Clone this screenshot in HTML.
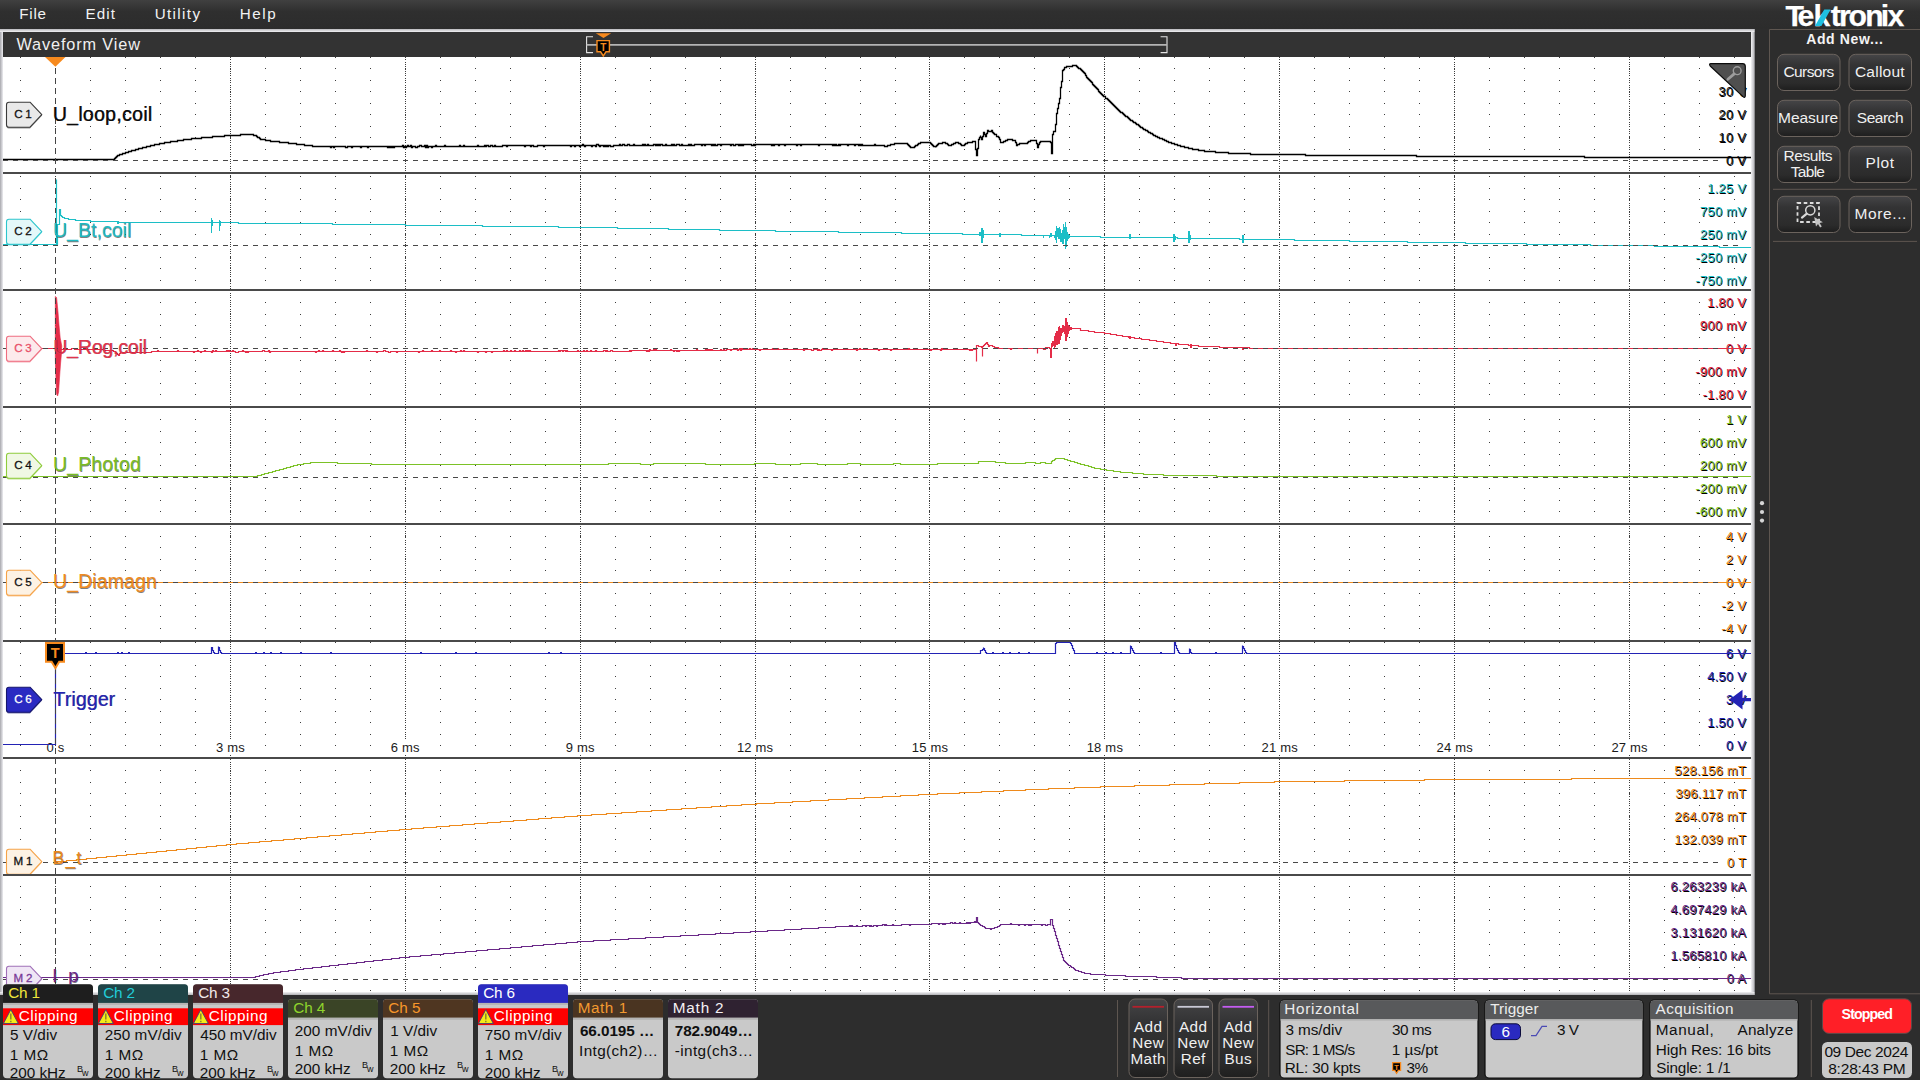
<!DOCTYPE html>
<html><head><meta charset="utf-8"><title>Waveform View</title>
<style>
html,body{margin:0;padding:0;background:#2d2d2d;overflow:hidden}
svg{display:block;font-family:"Liberation Sans",sans-serif}
</style></head><body>
<svg width="1920" height="1080" viewBox="0 0 1920 1080">
<defs>
<linearGradient id="gTop" x1="0" y1="0" x2="0" y2="1"><stop offset="0" stop-color="#404040"/><stop offset="0.4" stop-color="#2f2f2f"/><stop offset="1" stop-color="#2c2c2c"/></linearGradient>
<linearGradient id="gBtn" x1="0" y1="0" x2="0" y2="1"><stop offset="0" stop-color="#454547"/><stop offset="0.3" stop-color="#333334"/><stop offset="0.8" stop-color="#2b2b2b"/><stop offset="0.92" stop-color="#232323"/><stop offset="1" stop-color="#1f1f1f"/></linearGradient>
<linearGradient id="gLB" x1="0" y1="0" x2="1" y2="0"><stop offset="0" stop-color="#a8a8ad"/><stop offset="1" stop-color="#ececf0"/></linearGradient>
<linearGradient id="gRB" x1="0" y1="0" x2="1" y2="0"><stop offset="0" stop-color="#f4f4f6"/><stop offset="1" stop-color="#b4b4b8"/></linearGradient>
<linearGradient id="gTB" x1="0" y1="0" x2="0" y2="1"><stop offset="0" stop-color="#b8b8bc"/><stop offset="1" stop-color="#f2f2f4"/></linearGradient>
<linearGradient id="gBB" x1="0" y1="0" x2="0" y2="1"><stop offset="0" stop-color="#f2f2f4"/><stop offset="1" stop-color="#b0b0b4"/></linearGradient>
</defs>

<rect x="0" y="0" width="1920" height="1080" fill="#2d2d2d" />
<rect x="0" y="0" width="1920" height="29" fill="url(#gTop)" />
<rect x="0" y="29" width="1754.4" height="966" fill="#dcdce0" />
<rect x="0" y="29" width="3" height="966" fill="url(#gLB)" />
<rect x="1751" y="29" width="3.4" height="966" fill="url(#gRB)" />
<rect x="0" y="29" width="1754.4" height="3" fill="url(#gTB)" />
<rect x="0" y="992" width="1754.4" height="3" fill="url(#gBB)" />
<rect x="3" y="32" width="1748" height="25" fill="#333333" />
<rect x="3" y="57" width="1748" height="935" fill="#ffffff" />
<text x="19.15" y="18.80" font-size="15.2" letter-spacing="0.810"  fill="#f2f2f2">File</text>
<text x="85.45" y="18.80" font-size="15.2" letter-spacing="1.155"  fill="#f2f2f2">Edit</text>
<text x="154.63" y="18.80" font-size="15.2" letter-spacing="1.375"  fill="#f2f2f2">Utility</text>
<text x="239.75" y="18.80" font-size="15.2" letter-spacing="1.541"  fill="#f2f2f2">Help</text>
<text x="16.43" y="50.00" font-size="16.3" letter-spacing="0.867"  fill="#f0f0f0">Waveform View</text>
<g id="grid" shape-rendering="crispEdges">
<line x1="20" y1="57.5" x2="1751" y2="57.5" stroke="#3c3c3c" stroke-width="1" stroke-dasharray="1 33.98"/>
<line x1="20" y1="68.5" x2="1751" y2="68.5" stroke="#3c3c3c" stroke-width="1" stroke-dasharray="1 33.98"/>
<line x1="20" y1="80.5" x2="1751" y2="80.5" stroke="#3c3c3c" stroke-width="1" stroke-dasharray="1 33.98"/>
<line x1="20" y1="91.5" x2="1751" y2="91.5" stroke="#3c3c3c" stroke-width="1" stroke-dasharray="1 33.98"/>
<line x1="20" y1="103.5" x2="1751" y2="103.5" stroke="#3c3c3c" stroke-width="1" stroke-dasharray="1 33.98"/>
<line x1="20" y1="114.5" x2="1751" y2="114.5" stroke="#3c3c3c" stroke-width="1" stroke-dasharray="1 33.98"/>
<line x1="20" y1="126.5" x2="1751" y2="126.5" stroke="#3c3c3c" stroke-width="1" stroke-dasharray="1 33.98"/>
<line x1="20" y1="137.5" x2="1751" y2="137.5" stroke="#3c3c3c" stroke-width="1" stroke-dasharray="1 33.98"/>
<line x1="20" y1="149.5" x2="1751" y2="149.5" stroke="#3c3c3c" stroke-width="1" stroke-dasharray="1 33.98"/>
<line x1="20" y1="176.5" x2="1751" y2="176.5" stroke="#3c3c3c" stroke-width="1" stroke-dasharray="1 33.98"/>
<line x1="20" y1="188.5" x2="1751" y2="188.5" stroke="#3c3c3c" stroke-width="1" stroke-dasharray="1 33.98"/>
<line x1="20" y1="199.5" x2="1751" y2="199.5" stroke="#3c3c3c" stroke-width="1" stroke-dasharray="1 33.98"/>
<line x1="20" y1="211.5" x2="1751" y2="211.5" stroke="#3c3c3c" stroke-width="1" stroke-dasharray="1 33.98"/>
<line x1="20" y1="222.5" x2="1751" y2="222.5" stroke="#3c3c3c" stroke-width="1" stroke-dasharray="1 33.98"/>
<line x1="20" y1="234.5" x2="1751" y2="234.5" stroke="#3c3c3c" stroke-width="1" stroke-dasharray="1 33.98"/>
<line x1="20" y1="257.5" x2="1751" y2="257.5" stroke="#3c3c3c" stroke-width="1" stroke-dasharray="1 33.98"/>
<line x1="20" y1="268.5" x2="1751" y2="268.5" stroke="#3c3c3c" stroke-width="1" stroke-dasharray="1 33.98"/>
<line x1="20" y1="280.5" x2="1751" y2="280.5" stroke="#3c3c3c" stroke-width="1" stroke-dasharray="1 33.98"/>
<line x1="20" y1="302.5" x2="1751" y2="302.5" stroke="#3c3c3c" stroke-width="1" stroke-dasharray="1 33.98"/>
<line x1="20" y1="314.5" x2="1751" y2="314.5" stroke="#3c3c3c" stroke-width="1" stroke-dasharray="1 33.98"/>
<line x1="20" y1="325.5" x2="1751" y2="325.5" stroke="#3c3c3c" stroke-width="1" stroke-dasharray="1 33.98"/>
<line x1="20" y1="337.5" x2="1751" y2="337.5" stroke="#3c3c3c" stroke-width="1" stroke-dasharray="1 33.98"/>
<line x1="20" y1="360.5" x2="1751" y2="360.5" stroke="#3c3c3c" stroke-width="1" stroke-dasharray="1 33.98"/>
<line x1="20" y1="371.5" x2="1751" y2="371.5" stroke="#3c3c3c" stroke-width="1" stroke-dasharray="1 33.98"/>
<line x1="20" y1="383.5" x2="1751" y2="383.5" stroke="#3c3c3c" stroke-width="1" stroke-dasharray="1 33.98"/>
<line x1="20" y1="394.5" x2="1751" y2="394.5" stroke="#3c3c3c" stroke-width="1" stroke-dasharray="1 33.98"/>
<line x1="20" y1="419.5" x2="1751" y2="419.5" stroke="#3c3c3c" stroke-width="1" stroke-dasharray="1 33.98"/>
<line x1="20" y1="431.5" x2="1751" y2="431.5" stroke="#3c3c3c" stroke-width="1" stroke-dasharray="1 33.98"/>
<line x1="20" y1="442.5" x2="1751" y2="442.5" stroke="#3c3c3c" stroke-width="1" stroke-dasharray="1 33.98"/>
<line x1="20" y1="454.5" x2="1751" y2="454.5" stroke="#3c3c3c" stroke-width="1" stroke-dasharray="1 33.98"/>
<line x1="20" y1="465.5" x2="1751" y2="465.5" stroke="#3c3c3c" stroke-width="1" stroke-dasharray="1 33.98"/>
<line x1="20" y1="488.5" x2="1751" y2="488.5" stroke="#3c3c3c" stroke-width="1" stroke-dasharray="1 33.98"/>
<line x1="20" y1="500.5" x2="1751" y2="500.5" stroke="#3c3c3c" stroke-width="1" stroke-dasharray="1 33.98"/>
<line x1="20" y1="511.5" x2="1751" y2="511.5" stroke="#3c3c3c" stroke-width="1" stroke-dasharray="1 33.98"/>
<line x1="20" y1="536.5" x2="1751" y2="536.5" stroke="#3c3c3c" stroke-width="1" stroke-dasharray="1 33.98"/>
<line x1="20" y1="547.5" x2="1751" y2="547.5" stroke="#3c3c3c" stroke-width="1" stroke-dasharray="1 33.98"/>
<line x1="20" y1="559.5" x2="1751" y2="559.5" stroke="#3c3c3c" stroke-width="1" stroke-dasharray="1 33.98"/>
<line x1="20" y1="570.5" x2="1751" y2="570.5" stroke="#3c3c3c" stroke-width="1" stroke-dasharray="1 33.98"/>
<line x1="20" y1="593.5" x2="1751" y2="593.5" stroke="#3c3c3c" stroke-width="1" stroke-dasharray="1 33.98"/>
<line x1="20" y1="605.5" x2="1751" y2="605.5" stroke="#3c3c3c" stroke-width="1" stroke-dasharray="1 33.98"/>
<line x1="20" y1="616.5" x2="1751" y2="616.5" stroke="#3c3c3c" stroke-width="1" stroke-dasharray="1 33.98"/>
<line x1="20" y1="628.5" x2="1751" y2="628.5" stroke="#3c3c3c" stroke-width="1" stroke-dasharray="1 33.98"/>
<line x1="20" y1="642.5" x2="1751" y2="642.5" stroke="#3c3c3c" stroke-width="1" stroke-dasharray="1 33.98"/>
<line x1="20" y1="653.5" x2="1751" y2="653.5" stroke="#3c3c3c" stroke-width="1" stroke-dasharray="1 33.98"/>
<line x1="20" y1="665.5" x2="1751" y2="665.5" stroke="#3c3c3c" stroke-width="1" stroke-dasharray="1 33.98"/>
<line x1="20" y1="676.5" x2="1751" y2="676.5" stroke="#3c3c3c" stroke-width="1" stroke-dasharray="1 33.98"/>
<line x1="20" y1="688.5" x2="1751" y2="688.5" stroke="#3c3c3c" stroke-width="1" stroke-dasharray="1 33.98"/>
<line x1="20" y1="699.5" x2="1751" y2="699.5" stroke="#3c3c3c" stroke-width="1" stroke-dasharray="1 33.98"/>
<line x1="20" y1="711.5" x2="1751" y2="711.5" stroke="#3c3c3c" stroke-width="1" stroke-dasharray="1 33.98"/>
<line x1="20" y1="722.5" x2="1751" y2="722.5" stroke="#3c3c3c" stroke-width="1" stroke-dasharray="1 33.98"/>
<line x1="20" y1="734.5" x2="1751" y2="734.5" stroke="#3c3c3c" stroke-width="1" stroke-dasharray="1 33.98"/>
<line x1="20" y1="745.5" x2="1751" y2="745.5" stroke="#3c3c3c" stroke-width="1" stroke-dasharray="1 33.98"/>
<line x1="20" y1="770.5" x2="1751" y2="770.5" stroke="#3c3c3c" stroke-width="1" stroke-dasharray="1 33.98"/>
<line x1="20" y1="782.5" x2="1751" y2="782.5" stroke="#3c3c3c" stroke-width="1" stroke-dasharray="1 33.98"/>
<line x1="20" y1="793.5" x2="1751" y2="793.5" stroke="#3c3c3c" stroke-width="1" stroke-dasharray="1 33.98"/>
<line x1="20" y1="805.5" x2="1751" y2="805.5" stroke="#3c3c3c" stroke-width="1" stroke-dasharray="1 33.98"/>
<line x1="20" y1="816.5" x2="1751" y2="816.5" stroke="#3c3c3c" stroke-width="1" stroke-dasharray="1 33.98"/>
<line x1="20" y1="828.5" x2="1751" y2="828.5" stroke="#3c3c3c" stroke-width="1" stroke-dasharray="1 33.98"/>
<line x1="20" y1="839.5" x2="1751" y2="839.5" stroke="#3c3c3c" stroke-width="1" stroke-dasharray="1 33.98"/>
<line x1="20" y1="851.5" x2="1751" y2="851.5" stroke="#3c3c3c" stroke-width="1" stroke-dasharray="1 33.98"/>
<line x1="20" y1="886.5" x2="1751" y2="886.5" stroke="#3c3c3c" stroke-width="1" stroke-dasharray="1 33.98"/>
<line x1="20" y1="897.5" x2="1751" y2="897.5" stroke="#3c3c3c" stroke-width="1" stroke-dasharray="1 33.98"/>
<line x1="20" y1="909.5" x2="1751" y2="909.5" stroke="#3c3c3c" stroke-width="1" stroke-dasharray="1 33.98"/>
<line x1="20" y1="920.5" x2="1751" y2="920.5" stroke="#3c3c3c" stroke-width="1" stroke-dasharray="1 33.98"/>
<line x1="20" y1="932.5" x2="1751" y2="932.5" stroke="#3c3c3c" stroke-width="1" stroke-dasharray="1 33.98"/>
<line x1="20" y1="944.5" x2="1751" y2="944.5" stroke="#3c3c3c" stroke-width="1" stroke-dasharray="1 33.98"/>
<line x1="20" y1="955.5" x2="1751" y2="955.5" stroke="#3c3c3c" stroke-width="1" stroke-dasharray="1 33.98"/>
<line x1="20" y1="967.5" x2="1751" y2="967.5" stroke="#3c3c3c" stroke-width="1" stroke-dasharray="1 33.98"/>
<line x1="20" y1="990.5" x2="1751" y2="990.5" stroke="#3c3c3c" stroke-width="1" stroke-dasharray="1 33.98"/>
<line x1="230.5" y1="57" x2="230.5" y2="992" stroke="#3c3c3c" stroke-width="1" stroke-dasharray="1 1.31"/>
<line x1="405.5" y1="57" x2="405.5" y2="992" stroke="#3c3c3c" stroke-width="1" stroke-dasharray="1 1.31"/>
<line x1="580.5" y1="57" x2="580.5" y2="992" stroke="#3c3c3c" stroke-width="1" stroke-dasharray="1 1.31"/>
<line x1="755.5" y1="57" x2="755.5" y2="992" stroke="#3c3c3c" stroke-width="1" stroke-dasharray="1 1.31"/>
<line x1="929.5" y1="57" x2="929.5" y2="992" stroke="#3c3c3c" stroke-width="1" stroke-dasharray="1 1.31"/>
<line x1="1104.5" y1="57" x2="1104.5" y2="992" stroke="#3c3c3c" stroke-width="1" stroke-dasharray="1 1.31"/>
<line x1="1279.5" y1="57" x2="1279.5" y2="992" stroke="#3c3c3c" stroke-width="1" stroke-dasharray="1 1.31"/>
<line x1="1454.5" y1="57" x2="1454.5" y2="992" stroke="#3c3c3c" stroke-width="1" stroke-dasharray="1 1.31"/>
<line x1="1629.5" y1="57" x2="1629.5" y2="992" stroke="#3c3c3c" stroke-width="1" stroke-dasharray="1 1.31"/>
</g>
<g id="ylabels">
<rect x="1716.8" y="86" width="31.5" height="12" fill="#ffffff" />
<text x="1747.10" y="97.20" font-size="13" letter-spacing="0.250" text-anchor="end"  fill="#000">30 V</text>
<text x="1746.30" y="96.40" font-size="13" letter-spacing="0.250" text-anchor="end"  fill="#111111">30 V</text>
<rect x="1716.8" y="109" width="31.5" height="12" fill="#ffffff" />
<text x="1747.10" y="120.20" font-size="13" letter-spacing="0.250" text-anchor="end"  fill="#000">20 V</text>
<text x="1746.30" y="119.40" font-size="13" letter-spacing="0.250" text-anchor="end"  fill="#111111">20 V</text>
<rect x="1716.8" y="132" width="31.5" height="12" fill="#ffffff" />
<text x="1747.10" y="143.20" font-size="13" letter-spacing="0.250" text-anchor="end"  fill="#000">10 V</text>
<text x="1746.30" y="142.40" font-size="13" letter-spacing="0.250" text-anchor="end"  fill="#111111">10 V</text>
<rect x="1724.3" y="155" width="24.0" height="12" fill="#ffffff" />
<text x="1747.10" y="166.20" font-size="13" letter-spacing="0.250" text-anchor="end"  fill="#000">0 V</text>
<text x="1746.30" y="165.40" font-size="13" letter-spacing="0.250" text-anchor="end"  fill="#111111">0 V</text>
<rect x="1705.5" y="183" width="42.8" height="12" fill="#ffffff" />
<text x="1747.10" y="194.20" font-size="13" letter-spacing="0.250" text-anchor="end"  fill="#000">1.25 V</text>
<text x="1746.30" y="193.40" font-size="13" letter-spacing="0.250" text-anchor="end"  fill="#1cbec6">1.25 V</text>
<rect x="1698.2" y="206" width="50.1" height="12" fill="#ffffff" />
<text x="1747.10" y="217.20" font-size="13" letter-spacing="0.250" text-anchor="end"  fill="#000">750 mV</text>
<text x="1746.30" y="216.40" font-size="13" letter-spacing="0.250" text-anchor="end"  fill="#1cbec6">750 mV</text>
<rect x="1698.2" y="229" width="50.1" height="12" fill="#ffffff" />
<text x="1747.10" y="240.20" font-size="13" letter-spacing="0.250" text-anchor="end"  fill="#000">250 mV</text>
<text x="1746.30" y="239.40" font-size="13" letter-spacing="0.250" text-anchor="end"  fill="#1cbec6">250 mV</text>
<rect x="1693.7" y="252" width="54.6" height="12" fill="#ffffff" />
<text x="1747.10" y="263.20" font-size="13" letter-spacing="0.250" text-anchor="end"  fill="#000">-250 mV</text>
<text x="1746.30" y="262.40" font-size="13" letter-spacing="0.250" text-anchor="end"  fill="#1cbec6">-250 mV</text>
<rect x="1693.7" y="275" width="54.6" height="12" fill="#ffffff" />
<text x="1747.10" y="286.20" font-size="13" letter-spacing="0.250" text-anchor="end"  fill="#000">-750 mV</text>
<text x="1746.30" y="285.40" font-size="13" letter-spacing="0.250" text-anchor="end"  fill="#1cbec6">-750 mV</text>
<rect x="1705.5" y="297" width="42.8" height="12" fill="#ffffff" />
<text x="1747.10" y="308.20" font-size="13" letter-spacing="0.250" text-anchor="end"  fill="#000">1.80 V</text>
<text x="1746.30" y="307.40" font-size="13" letter-spacing="0.250" text-anchor="end"  fill="#e42c48">1.80 V</text>
<rect x="1698.2" y="320" width="50.1" height="12" fill="#ffffff" />
<text x="1747.10" y="331.20" font-size="13" letter-spacing="0.250" text-anchor="end"  fill="#000">900 mV</text>
<text x="1746.30" y="330.40" font-size="13" letter-spacing="0.250" text-anchor="end"  fill="#e42c48">900 mV</text>
<rect x="1724.3" y="343" width="24.0" height="12" fill="#ffffff" />
<text x="1747.10" y="354.20" font-size="13" letter-spacing="0.250" text-anchor="end"  fill="#000">0 V</text>
<text x="1746.30" y="353.40" font-size="13" letter-spacing="0.250" text-anchor="end"  fill="#e42c48">0 V</text>
<rect x="1693.7" y="366" width="54.6" height="12" fill="#ffffff" />
<text x="1747.10" y="377.20" font-size="13" letter-spacing="0.250" text-anchor="end"  fill="#000">-900 mV</text>
<text x="1746.30" y="376.40" font-size="13" letter-spacing="0.250" text-anchor="end"  fill="#e42c48">-900 mV</text>
<rect x="1700.9" y="389" width="47.4" height="12" fill="#ffffff" />
<text x="1747.10" y="400.20" font-size="13" letter-spacing="0.250" text-anchor="end"  fill="#000">-1.80 V</text>
<text x="1746.30" y="399.40" font-size="13" letter-spacing="0.250" text-anchor="end"  fill="#e42c48">-1.80 V</text>
<rect x="1724.3" y="414" width="24.0" height="12" fill="#ffffff" />
<text x="1747.10" y="425.20" font-size="13" letter-spacing="0.250" text-anchor="end"  fill="#000">1 V</text>
<text x="1746.30" y="424.40" font-size="13" letter-spacing="0.250" text-anchor="end"  fill="#7cc227">1 V</text>
<rect x="1698.2" y="437" width="50.1" height="12" fill="#ffffff" />
<text x="1747.10" y="448.20" font-size="13" letter-spacing="0.250" text-anchor="end"  fill="#000">600 mV</text>
<text x="1746.30" y="447.40" font-size="13" letter-spacing="0.250" text-anchor="end"  fill="#7cc227">600 mV</text>
<rect x="1698.2" y="460" width="50.1" height="12" fill="#ffffff" />
<text x="1747.10" y="471.20" font-size="13" letter-spacing="0.250" text-anchor="end"  fill="#000">200 mV</text>
<text x="1746.30" y="470.40" font-size="13" letter-spacing="0.250" text-anchor="end"  fill="#7cc227">200 mV</text>
<rect x="1693.7" y="483" width="54.6" height="12" fill="#ffffff" />
<text x="1747.10" y="494.20" font-size="13" letter-spacing="0.250" text-anchor="end"  fill="#000">-200 mV</text>
<text x="1746.30" y="493.40" font-size="13" letter-spacing="0.250" text-anchor="end"  fill="#7cc227">-200 mV</text>
<rect x="1693.7" y="506" width="54.6" height="12" fill="#ffffff" />
<text x="1747.10" y="517.20" font-size="13" letter-spacing="0.250" text-anchor="end"  fill="#000">-600 mV</text>
<text x="1746.30" y="516.40" font-size="13" letter-spacing="0.250" text-anchor="end"  fill="#7cc227">-600 mV</text>
<rect x="1724.3" y="531" width="24.0" height="12" fill="#ffffff" />
<text x="1747.10" y="542.20" font-size="13" letter-spacing="0.250" text-anchor="end"  fill="#000">4 V</text>
<text x="1746.30" y="541.40" font-size="13" letter-spacing="0.250" text-anchor="end"  fill="#f28c1e">4 V</text>
<rect x="1724.3" y="554" width="24.0" height="12" fill="#ffffff" />
<text x="1747.10" y="565.20" font-size="13" letter-spacing="0.250" text-anchor="end"  fill="#000">2 V</text>
<text x="1746.30" y="564.40" font-size="13" letter-spacing="0.250" text-anchor="end"  fill="#f28c1e">2 V</text>
<rect x="1724.3" y="577" width="24.0" height="12" fill="#ffffff" />
<text x="1747.10" y="588.20" font-size="13" letter-spacing="0.250" text-anchor="end"  fill="#000">0 V</text>
<text x="1746.30" y="587.40" font-size="13" letter-spacing="0.250" text-anchor="end"  fill="#f28c1e">0 V</text>
<rect x="1719.7" y="600" width="28.6" height="12" fill="#ffffff" />
<text x="1747.10" y="611.20" font-size="13" letter-spacing="0.250" text-anchor="end"  fill="#000">-2 V</text>
<text x="1746.30" y="610.40" font-size="13" letter-spacing="0.250" text-anchor="end"  fill="#f28c1e">-2 V</text>
<rect x="1719.7" y="623" width="28.6" height="12" fill="#ffffff" />
<text x="1747.10" y="634.20" font-size="13" letter-spacing="0.250" text-anchor="end"  fill="#000">-4 V</text>
<text x="1746.30" y="633.40" font-size="13" letter-spacing="0.250" text-anchor="end"  fill="#f28c1e">-4 V</text>
<rect x="1724.3" y="648" width="24.0" height="12" fill="#ffffff" />
<text x="1747.10" y="659.20" font-size="13" letter-spacing="0.250" text-anchor="end"  fill="#000">6 V</text>
<text x="1746.30" y="658.40" font-size="13" letter-spacing="0.250" text-anchor="end"  fill="#2323b5">6 V</text>
<rect x="1705.5" y="671" width="42.8" height="12" fill="#ffffff" />
<text x="1747.10" y="682.20" font-size="13" letter-spacing="0.250" text-anchor="end"  fill="#000">4.50 V</text>
<text x="1746.30" y="681.40" font-size="13" letter-spacing="0.250" text-anchor="end"  fill="#2323b5">4.50 V</text>
<rect x="1724.3" y="694" width="24.0" height="12" fill="#ffffff" />
<text x="1747.10" y="705.20" font-size="13" letter-spacing="0.250" text-anchor="end"  fill="#000">3 V</text>
<text x="1746.30" y="704.40" font-size="13" letter-spacing="0.250" text-anchor="end"  fill="#2323b5">3 V</text>
<rect x="1705.5" y="717" width="42.8" height="12" fill="#ffffff" />
<text x="1747.10" y="728.20" font-size="13" letter-spacing="0.250" text-anchor="end"  fill="#000">1.50 V</text>
<text x="1746.30" y="727.40" font-size="13" letter-spacing="0.250" text-anchor="end"  fill="#2323b5">1.50 V</text>
<rect x="1724.3" y="740" width="24.0" height="12" fill="#ffffff" />
<text x="1747.10" y="751.20" font-size="13" letter-spacing="0.250" text-anchor="end"  fill="#000">0 V</text>
<text x="1746.30" y="750.40" font-size="13" letter-spacing="0.250" text-anchor="end"  fill="#2323b5">0 V</text>
<rect x="1672.7" y="765" width="75.6" height="12" fill="#ffffff" />
<text x="1747.10" y="776.20" font-size="13" letter-spacing="0.250" text-anchor="end"  fill="#000">528.156 mT</text>
<text x="1746.30" y="775.40" font-size="13" letter-spacing="0.250" text-anchor="end"  fill="#ee8a1c">528.156 mT</text>
<rect x="1672.7" y="788" width="75.6" height="12" fill="#ffffff" />
<text x="1747.10" y="799.20" font-size="13" letter-spacing="0.250" text-anchor="end"  fill="#000">396.117 mT</text>
<text x="1746.30" y="798.40" font-size="13" letter-spacing="0.250" text-anchor="end"  fill="#ee8a1c">396.117 mT</text>
<rect x="1672.7" y="811" width="75.6" height="12" fill="#ffffff" />
<text x="1747.10" y="822.20" font-size="13" letter-spacing="0.250" text-anchor="end"  fill="#000">264.078 mT</text>
<text x="1746.30" y="821.40" font-size="13" letter-spacing="0.250" text-anchor="end"  fill="#ee8a1c">264.078 mT</text>
<rect x="1672.7" y="834" width="75.6" height="12" fill="#ffffff" />
<text x="1747.10" y="845.20" font-size="13" letter-spacing="0.250" text-anchor="end"  fill="#000">132.039 mT</text>
<text x="1746.30" y="844.40" font-size="13" letter-spacing="0.250" text-anchor="end"  fill="#ee8a1c">132.039 mT</text>
<rect x="1725.0" y="857" width="23.3" height="12" fill="#ffffff" />
<text x="1747.10" y="868.20" font-size="13" letter-spacing="0.250" text-anchor="end"  fill="#000">0 T</text>
<text x="1746.30" y="867.40" font-size="13" letter-spacing="0.250" text-anchor="end"  fill="#ee8a1c">0 T</text>
<rect x="1668.8" y="881" width="79.5" height="12" fill="#ffffff" />
<text x="1747.10" y="892.20" font-size="13" letter-spacing="0.250" text-anchor="end"  fill="#000">6.263239 kA</text>
<text x="1746.30" y="891.40" font-size="13" letter-spacing="0.250" text-anchor="end"  fill="#6a2888">6.263239 kA</text>
<rect x="1668.8" y="904" width="79.5" height="12" fill="#ffffff" />
<text x="1747.10" y="915.20" font-size="13" letter-spacing="0.250" text-anchor="end"  fill="#000">4.697429 kA</text>
<text x="1746.30" y="914.40" font-size="13" letter-spacing="0.250" text-anchor="end"  fill="#6a2888">4.697429 kA</text>
<rect x="1668.8" y="927" width="79.5" height="12" fill="#ffffff" />
<text x="1747.10" y="938.20" font-size="13" letter-spacing="0.250" text-anchor="end"  fill="#000">3.131620 kA</text>
<text x="1746.30" y="937.40" font-size="13" letter-spacing="0.250" text-anchor="end"  fill="#6a2888">3.131620 kA</text>
<rect x="1668.8" y="950" width="79.5" height="12" fill="#ffffff" />
<text x="1747.10" y="961.20" font-size="13" letter-spacing="0.250" text-anchor="end"  fill="#000">1.565810 kA</text>
<text x="1746.30" y="960.40" font-size="13" letter-spacing="0.250" text-anchor="end"  fill="#6a2888">1.565810 kA</text>
<rect x="1724.3" y="973" width="24.0" height="12" fill="#ffffff" />
<text x="1747.10" y="984.20" font-size="13" letter-spacing="0.250" text-anchor="end"  fill="#000">0 A</text>
<text x="1746.30" y="983.40" font-size="13" letter-spacing="0.250" text-anchor="end"  fill="#6a2888">0 A</text>
</g>
<g id="tlabels">
<text x="55.50" y="751.60" font-size="13" letter-spacing="0.200" text-anchor="middle"  fill="#1a1a1a" stroke="#fff" stroke-width="2" stroke-linejoin="round" paint-order="stroke">0 s</text>
<rect x="214.5" y="741" width="31.8" height="12" fill="#ffffff" />
<text x="230.40" y="751.60" font-size="13" letter-spacing="0.200" text-anchor="middle"  fill="#1a1a1a" stroke="#fff" stroke-width="2" stroke-linejoin="round" paint-order="stroke">3 ms</text>
<rect x="389.4" y="741" width="31.8" height="12" fill="#ffffff" />
<text x="405.30" y="751.60" font-size="13" letter-spacing="0.200" text-anchor="middle"  fill="#1a1a1a" stroke="#fff" stroke-width="2" stroke-linejoin="round" paint-order="stroke">6 ms</text>
<rect x="564.3" y="741" width="31.8" height="12" fill="#ffffff" />
<text x="580.20" y="751.60" font-size="13" letter-spacing="0.200" text-anchor="middle"  fill="#1a1a1a" stroke="#fff" stroke-width="2" stroke-linejoin="round" paint-order="stroke">9 ms</text>
<rect x="735.5" y="741" width="39.2" height="12" fill="#ffffff" />
<text x="755.10" y="751.60" font-size="13" letter-spacing="0.200" text-anchor="middle"  fill="#1a1a1a" stroke="#fff" stroke-width="2" stroke-linejoin="round" paint-order="stroke">12 ms</text>
<rect x="910.4" y="741" width="39.2" height="12" fill="#ffffff" />
<text x="930.00" y="751.60" font-size="13" letter-spacing="0.200" text-anchor="middle"  fill="#1a1a1a" stroke="#fff" stroke-width="2" stroke-linejoin="round" paint-order="stroke">15 ms</text>
<rect x="1085.3" y="741" width="39.2" height="12" fill="#ffffff" />
<text x="1104.90" y="751.60" font-size="13" letter-spacing="0.200" text-anchor="middle"  fill="#1a1a1a" stroke="#fff" stroke-width="2" stroke-linejoin="round" paint-order="stroke">18 ms</text>
<rect x="1260.2" y="741" width="39.2" height="12" fill="#ffffff" />
<text x="1279.80" y="751.60" font-size="13" letter-spacing="0.200" text-anchor="middle"  fill="#1a1a1a" stroke="#fff" stroke-width="2" stroke-linejoin="round" paint-order="stroke">21 ms</text>
<rect x="1435.1" y="741" width="39.2" height="12" fill="#ffffff" />
<text x="1454.70" y="751.60" font-size="13" letter-spacing="0.200" text-anchor="middle"  fill="#1a1a1a" stroke="#fff" stroke-width="2" stroke-linejoin="round" paint-order="stroke">24 ms</text>
<rect x="1610.0" y="741" width="39.2" height="12" fill="#ffffff" />
<text x="1629.60" y="751.60" font-size="13" letter-spacing="0.200" text-anchor="middle"  fill="#1a1a1a" stroke="#fff" stroke-width="2" stroke-linejoin="round" paint-order="stroke">27 ms</text>
</g>
<g id="waves">
<path d="M3.0 159.5H114.5V158.5H115.5V157.5H116.5V156.5H117.5V155.5H119.5V154.5H122.5V153.5H125.5V152.5H128.5V151.5H131.5V150.5H135.5V149.5H138.5V148.5H142.5V147.5H146.5V146.5H150.5V145.5H154.5V144.5H159.5V143.5H164.5V142.5H170.5V141.5H177.5V140.5H183.5V139.5H191.5V138.5H201.5V137.5H212.5V136.5H224.5V135.5H240.5V134.5H253.5V135.5H256.5V136.5H257.5V137.5H259.5V138.5H260.5V139.5H265.5V140.5H270.5V141.5H279.5V142.5H288.5V143.5H296.5V144.5H304.5V145.5H312.5V146.5H330.5V147.5H331.5V146.5H333.5V147.5H334.5V146.5H345.5V147.5H347.5V146.5H351.5V147.5H352.5V146.5H360.5V147.5H361.5V146.5H367.5V147.5H368.5V146.5H387.5V147.5H388.5V146.5H389.5V147.5H390.5V146.5H391.5V147.5H392.5V146.5H393.5V147.5H394.5V146.5H402.5V145.5H403.5V147.5H404.5V146.5H405.5V147.5H406.5V146.5H407.5V145.5H408.5V146.5H410.5V145.5H411.5V147.5H412.5V146.5H415.5V147.5H417.5V146.5H419.5V145.5H421.5V146.5H424.5V145.5H425.5V147.5H426.5V145.5H427.5V147.5H428.5V146.5H431.5V147.5H432.5V146.5H435.5V145.5H436.5V146.5H444.5V145.5H445.5V146.5H459.5V145.5H460.5V146.5H463.5V145.5H464.5V146.5H477.5V145.5H478.5V146.5H484.5V145.5H485.5V146.5H486.5V145.5H488.5V146.5H490.5V145.5H492.5V146.5H494.5V145.5H495.5V146.5H502.5V145.5H506.5V146.5H507.5V145.5H524.5V146.5H525.5V145.5H530.5V146.5H531.5V145.5H533.5V146.5H537.5V145.5H543.5V146.5H544.5V145.5H570.5V146.5H571.5V145.5H574.5V146.5H575.5V145.5H579.5V146.5H580.5V145.5H582.5V144.5H583.5V145.5H584.5V146.5H585.5V145.5H591.5V146.5H592.5V145.5H595.5V146.5H596.5V144.5H598.5V145.5H599.5V146.5H600.5V145.5H603.5V146.5H604.5V145.5H605.5V146.5H606.5V145.5H607.5V146.5H608.5V145.5H610.5V146.5H613.5V145.5H619.5V144.5H620.5V145.5H622.5V144.5H624.5V145.5H627.5V144.5H629.5V145.5H633.5V144.5H634.5V145.5H642.5V144.5H643.5V145.5H644.5V144.5H645.5V145.5H647.5V144.5H648.5V145.5H653.5V144.5H655.5V145.5H656.5V144.5H657.5V145.5H658.5V144.5H659.5V145.5H660.5V144.5H662.5V145.5H665.5V144.5H666.5V145.5H671.5V144.5H672.5V145.5H673.5V144.5H674.5V145.5H676.5V144.5H679.5V145.5H681.5V144.5H682.5V145.5H688.5V144.5H689.5V145.5H690.5V144.5H691.5V145.5H694.5V144.5H701.5V145.5H702.5V144.5H704.5V145.5H705.5V144.5H711.5V145.5H712.5V144.5H713.5V145.5H714.5V144.5H715.5V145.5H717.5V144.5H720.5V145.5H721.5V144.5H730.5V145.5H731.5V144.5H733.5V145.5H735.5V144.5H738.5V145.5H739.5V144.5H740.5V145.5H741.5V144.5H742.5V145.5H743.5V144.5H751.5V145.5H753.5V144.5H754.5V145.5H755.5V144.5H771.5V145.5H772.5V144.5H773.5V145.5H774.5V144.5H778.5V145.5H779.5V144.5H784.5V145.5H785.5V144.5H796.5V145.5H797.5V144.5H800.5V145.5H801.5V144.5H818.5V145.5H819.5V144.5H832.5V145.5H833.5V144.5H834.5V145.5H835.5V144.5H836.5V145.5H838.5V144.5H839.5V145.5H840.5V144.5H847.5V145.5H848.5V144.5H854.5V145.5H855.5V144.5H858.5V145.5H859.5V144.5H860.5V145.5H861.5V144.5H862.5V145.5H874.5V144.5H875.5V145.5H884.5V146.5H887.5V145.5H890.5V144.5H894.5V143.5H907.5V144.5H908.5V145.5H909.5V146.5H910.5V147.5H914.5V146.5H915.5V145.5H917.5V144.5H918.5V143.5H920.5V142.5H930.5V143.5H931.5V144.5H932.5V145.5H933.5V146.5H935.5V147.5H935.5V146.5H936.5V145.5H937.5V144.5H938.5V143.5H942.5V142.5H945.5V143.5H947.5V144.5H948.5V145.5H951.5V144.5H953.5V143.5H955.5V142.5H958.5V143.5H960.5V144.5H961.5V145.5H964.5V144.5H965.5V143.5H967.5V142.5H972.5V141.5H975.5V149.5H976.5V155.5H977.5V148.5H978.5V139.5H979.5V137.5H980.5V135.5H980.5V137.5H981.5V139.5H982.5V136.5H983.5V132.5H984.5V134.5H985.5V136.5H986.5V133.5H987.5V130.5H988.5V131.5H991.5V130.5H992.5V132.5H993.5V133.5H994.5V134.5H996.5V136.5H998.5V137.5H999.5V139.5H1000.5V142.5H1003.5V141.5H1005.5V140.5H1007.5V139.5H1012.5V140.5H1015.5V142.5H1016.5V145.5H1017.5V144.5H1019.5V143.5H1027.5V142.5H1028.5V141.5H1030.5V140.5H1036.5V143.5H1037.5V147.5H1038.5V144.5H1039.5V142.5H1040.5V141.5H1050.5V142.5H1051.5V153.5H1052.5V138.5H1052.5V134.5H1053.5V131.5H1055.5V124.5H1056.5V113.5H1057.5V108.5H1058.5V103.5H1059.5V98.5H1060.5V93.5H1060.5V87.5H1061.5V81.5H1062.5V70.5H1063.5V69.5H1064.5V67.5H1066.5V66.5H1072.5V65.5H1076.5V66.5H1077.5V67.5H1078.5V68.5H1080.5V69.5H1081.5V70.5H1082.5V71.5H1083.5V72.5H1084.5V73.5H1085.5V74.5H1085.5V75.5H1086.5V77.5H1087.5V78.5H1088.5V79.5H1089.5V80.5H1090.5V81.5H1091.5V82.5H1092.5V84.5H1093.5V85.5H1094.5V86.5H1095.5V87.5H1096.5V88.5H1097.5V89.5H1098.5V91.5H1099.5V92.5H1100.5V93.5H1101.5V94.5H1102.5V95.5H1103.5V96.5H1105.5V98.5H1107.5V99.5H1108.5V100.5H1109.5V101.5H1110.5V102.5H1111.5V103.5H1112.5V104.5H1113.5V105.5H1114.5V106.5H1115.5V107.5H1116.5V108.5H1117.5V109.5H1118.5V110.5H1119.5V111.5H1120.5V112.5H1122.5V113.5H1123.5V114.5H1124.5V115.5H1125.5V116.5H1127.5V117.5H1128.5V118.5H1129.5V119.5H1130.5V120.5H1132.5V121.5H1133.5V122.5H1135.5V123.5H1136.5V124.5H1138.5V125.5H1139.5V126.5H1140.5V127.5H1142.5V128.5H1143.5V129.5H1145.5V130.5H1147.5V131.5H1148.5V132.5H1150.5V133.5H1152.5V134.5H1153.5V135.5H1155.5V136.5H1157.5V137.5H1159.5V138.5H1162.5V139.5H1164.5V140.5H1166.5V141.5H1168.5V142.5H1171.5V143.5H1174.5V144.5H1177.5V145.5H1180.5V146.5H1184.5V147.5H1188.5V148.5H1192.5V149.5H1198.5V150.5H1204.5V151.5H1215.5V152.5H1228.5V153.5H1250.5V154.5H1305.5V155.5H1416.5V156.5H1584.5V157.5H1751.0" fill="none" stroke="#000" stroke-width="1.3" stroke-linejoin="miter"/>
<path d="M3.0 244.5H56.5V179.5H56.5V244.5H57.5V224.5H59.5V209.5H60.5V215.5H61.5V216.5H62.5V217.5H64.5V218.5H68.5V219.5H75.5V220.5H90.5V221.5H118.5V222.5H238.5V223.5H332.5V224.5H405.5V225.5H482.5V226.5H558.5V227.5H617.5V228.5H668.5V229.5H719.5V230.5H775.5V231.5H838.5V232.5H901.5V233.5H962.5V234.5H1021.5V235.5H1067.5V236.5H1100.5V237.5H1177.5V238.5H1239.5V239.5H1294.5V240.5H1349.5V241.5H1407.5V242.5H1465.5V243.5H1526.5V244.5H1590.5V245.5H1654.5V246.5H1719.5V247.5H1751.0" fill="none" stroke="#1cbec6" stroke-width="1.2" stroke-linejoin="miter"/>
<path d="M118.0 220.5V223.5" stroke="#1cbec6" stroke-width="1.3" fill="none" shape-rendering="crispEdges"/>
<path d="M211.5 218.4V232.7" stroke="#1cbec6" stroke-width="1.3" fill="none" shape-rendering="crispEdges"/>
<path d="M212.5 220.0V226.0" stroke="#1cbec6" stroke-width="1.3" fill="none" shape-rendering="crispEdges"/>
<path d="M219.4 220.0V230.9" stroke="#1cbec6" stroke-width="1.3" fill="none" shape-rendering="crispEdges"/>
<path d="M220.4 221.0V226.0" stroke="#1cbec6" stroke-width="1.3" fill="none" shape-rendering="crispEdges"/>
<path d="M982.0 227.5V242.5" stroke="#1cbec6" stroke-width="1.3" fill="none" shape-rendering="crispEdges"/>
<path d="M983.0 230.0V238.0" stroke="#1cbec6" stroke-width="1.3" fill="none" shape-rendering="crispEdges"/>
<path d="M980.0 232.0V236.0" stroke="#1cbec6" stroke-width="1.3" fill="none" shape-rendering="crispEdges"/>
<path d="M1130.0 234.0V239.0" stroke="#1cbec6" stroke-width="1.3" fill="none" shape-rendering="crispEdges"/>
<path d="M1174.0 233.5V242.0" stroke="#1cbec6" stroke-width="1.3" fill="none" shape-rendering="crispEdges"/>
<path d="M1175.0 236.0V240.0" stroke="#1cbec6" stroke-width="1.3" fill="none" shape-rendering="crispEdges"/>
<path d="M1189.0 231.0V243.0" stroke="#1cbec6" stroke-width="1.3" fill="none" shape-rendering="crispEdges"/>
<path d="M1190.0 235.0V240.0" stroke="#1cbec6" stroke-width="1.3" fill="none" shape-rendering="crispEdges"/>
<path d="M1243.0 235.0V243.0" stroke="#1cbec6" stroke-width="1.3" fill="none" shape-rendering="crispEdges"/>
<path d="M1000.0 232.5V236.5" stroke="#1cbec6" stroke-width="1.3" fill="none" shape-rendering="crispEdges"/>
<rect x="1054" y="234.5" width="1" height="3.0" fill="#1cbec6" shape-rendering="crispEdges"/>
<rect x="1055" y="231" width="1" height="8.5" fill="#1cbec6" shape-rendering="crispEdges"/>
<rect x="1056" y="226" width="1" height="17" fill="#1cbec6" shape-rendering="crispEdges"/>
<rect x="1057" y="228" width="1" height="9" fill="#1cbec6" shape-rendering="crispEdges"/>
<rect x="1058" y="228" width="1" height="11" fill="#1cbec6" shape-rendering="crispEdges"/>
<rect x="1059" y="227" width="1" height="12" fill="#1cbec6" shape-rendering="crispEdges"/>
<rect x="1060" y="229" width="1" height="13" fill="#1cbec6" shape-rendering="crispEdges"/>
<rect x="1061" y="233" width="1" height="9" fill="#1cbec6" shape-rendering="crispEdges"/>
<rect x="1062" y="230" width="1" height="14" fill="#1cbec6" shape-rendering="crispEdges"/>
<rect x="1063" y="224" width="1" height="20" fill="#1cbec6" shape-rendering="crispEdges"/>
<rect x="1064" y="227" width="1" height="12" fill="#1cbec6" shape-rendering="crispEdges"/>
<rect x="1065" y="222" width="1" height="27" fill="#1cbec6" shape-rendering="crispEdges"/>
<rect x="1066" y="227" width="1" height="20" fill="#1cbec6" shape-rendering="crispEdges"/>
<rect x="1067" y="232" width="1" height="9" fill="#1cbec6" shape-rendering="crispEdges"/>
<rect x="1068" y="234" width="1" height="5" fill="#1cbec6" shape-rendering="crispEdges"/>
<rect x="1069" y="235" width="1" height="3" fill="#1cbec6" shape-rendering="crispEdges"/>
<rect x="1050" y="233" width="1" height="3.5" fill="#1cbec6" shape-rendering="crispEdges"/>
<rect x="1051" y="233" width="1" height="3.5" fill="#1cbec6" shape-rendering="crispEdges"/>
<rect x="1043" y="235" width="1" height="2.5" fill="#1cbec6" shape-rendering="crispEdges"/>
<rect x="1049" y="235" width="1" height="2.5" fill="#1cbec6" shape-rendering="crispEdges"/>
<path d="M55.3 296.5L56.6 297.5L58 312L59 325L60.2 338L61.8 346L61.5 353L60.5 364L59.5 378L58.6 392L57.6 396L56.6 394L56 380L55.3 360Z" fill="#e42c48" stroke="#e42c48" stroke-width="0.6"/>
<path d="M3.0 348.5H60.5V349.5H71.5V348.5H74.5V349.5H103.5V350.5H113.5V351.5H115.5V352.5H116.5V353.5H117.5V354.5H118.5V355.5H119.5V353.5H120.5V352.5H151.5V351.5H157.5V350.5H158.5V351.5H177.5V350.5H178.5V351.5H193.5V352.5H194.5V351.5H197.5V350.5H198.5V351.5H200.5V352.5H201.5V351.5H204.5V350.5H205.5V351.5H211.5V352.5H212.5V350.5H213.5V351.5H215.5V350.5H216.5V351.5H226.5V350.5H227.5V351.5H228.5V350.5H229.5V351.5H232.5V350.5H233.5V351.5H235.5V352.5H238.5V351.5H242.5V350.5H243.5V351.5H245.5V352.5H246.5V351.5H247.5V352.5H248.5V351.5H262.5V350.5H264.5V351.5H268.5V350.5H269.5V352.5H270.5V351.5H315.5V352.5H316.5V351.5H318.5V350.5H319.5V351.5H322.5V350.5H323.5V351.5H332.5V350.5H333.5V351.5H339.5V350.5H340.5V351.5H341.5V352.5H342.5V351.5H343.5V352.5H344.5V351.5H366.5V350.5H367.5V351.5H376.5V352.5H377.5V351.5H383.5V350.5H385.5V351.5H388.5V352.5H390.5V351.5H396.5V352.5H397.5V351.5H418.5V352.5H419.5V351.5H422.5V350.5H423.5V351.5H431.5V350.5H432.5V351.5H439.5V350.5H440.5V351.5H450.5V350.5H451.5V351.5H455.5V352.5H456.5V351.5H460.5V350.5H461.5V351.5H463.5V350.5H464.5V351.5H477.5V352.5H478.5V351.5H485.5V352.5H486.5V351.5H491.5V352.5H492.5V351.5H503.5V350.5H504.5V351.5H506.5V350.5H507.5V351.5H510.5V350.5H511.5V351.5H514.5V350.5H515.5V351.5H519.5V350.5H520.5V351.5H522.5V350.5H523.5V351.5H525.5V350.5H526.5V351.5H527.5V350.5H528.5V351.5H529.5V350.5H530.5V351.5H558.5V350.5H559.5V351.5H560.5V350.5H562.5V351.5H563.5V350.5H565.5V351.5H566.5V350.5H567.5V351.5H577.5V350.5H578.5V351.5H583.5V350.5H584.5V351.5H586.5V350.5H587.5V351.5H590.5V350.5H591.5V351.5H595.5V350.5H596.5V351.5H603.5V350.5H605.5V351.5H606.5V350.5H607.5V351.5H610.5V350.5H612.5V351.5H629.5V350.5H630.5V351.5H631.5V350.5H646.5V351.5H647.5V350.5H648.5V351.5H649.5V349.5H650.5V350.5H653.5V349.5H654.5V350.5H655.5V349.5H656.5V350.5H670.5V349.5H671.5V350.5H673.5V351.5H674.5V350.5H676.5V351.5H677.5V350.5H678.5V351.5H679.5V350.5H696.5V349.5H697.5V350.5H705.5V349.5H706.5V350.5H707.5V349.5H708.5V350.5H709.5V349.5H710.5V350.5H711.5V349.5H712.5V350.5H720.5V349.5H721.5V350.5H723.5V349.5H724.5V350.5H726.5V349.5H730.5V350.5H731.5V349.5H737.5V350.5H738.5V349.5H739.5V348.5H740.5V350.5H741.5V348.5H742.5V349.5H744.5V348.5H745.5V349.5H746.5V348.5H747.5V349.5H749.5V348.5H750.5V349.5H752.5V348.5H753.5V349.5H759.5V350.5H760.5V349.5H772.5V348.5H773.5V349.5H777.5V348.5H778.5V349.5H786.5V348.5H787.5V349.5H803.5V350.5H804.5V349.5H811.5V350.5H813.5V349.5H816.5V348.5H817.5V350.5H818.5V349.5H819.5V350.5H821.5V349.5H822.5V348.5H823.5V349.5H831.5V350.5H832.5V349.5H846.5V348.5H847.5V349.5H856.5V350.5H857.5V349.5H859.5V348.5H860.5V349.5H878.5V350.5H879.5V349.5H890.5V350.5H891.5V349.5H908.5V348.5H909.5V349.5H924.5V348.5H925.5V349.5H930.5V350.5H931.5V349.5H940.5V350.5H941.5V348.5H942.5V349.5H965.5V348.5H966.5V349.5H969.5V350.5H970.5V349.5H971.5V350.5H972.5V349.5H976.5V361.5H976.5V345.5H978.5V346.5H981.5V347.5H982.5V356.5H982.5V346.5H983.5V345.5H984.5V344.5H985.5V343.5H986.5V342.5H987.5V344.5H988.5V346.5H989.5V345.5H992.5V346.5H994.5V347.5H998.5V348.5H1010.5V349.5H1011.5V348.5H1037.5V353.5H1037.5V348.5H1043.5V349.5H1045.5V347.5H1049.5V348.5H1050.0" fill="none" stroke="#e42c48" stroke-width="1.2" stroke-linejoin="miter"/>
<rect x="1050" y="348" width="1" height="9.5" fill="#e42c48" shape-rendering="crispEdges"/>
<rect x="1051" y="343" width="1" height="14.5" fill="#e42c48" shape-rendering="crispEdges"/>
<rect x="1052" y="341" width="1" height="6" fill="#e42c48" shape-rendering="crispEdges"/>
<rect x="1053" y="341" width="1" height="5" fill="#e42c48" shape-rendering="crispEdges"/>
<rect x="1054" y="336" width="1" height="12" fill="#e42c48" shape-rendering="crispEdges"/>
<rect x="1055" y="333" width="1" height="14" fill="#e42c48" shape-rendering="crispEdges"/>
<rect x="1056" y="331" width="1" height="14" fill="#e42c48" shape-rendering="crispEdges"/>
<rect x="1057" y="331" width="1" height="13.5" fill="#e42c48" shape-rendering="crispEdges"/>
<rect x="1058" y="327" width="1" height="17" fill="#e42c48" shape-rendering="crispEdges"/>
<rect x="1059" y="326" width="1" height="17.5" fill="#e42c48" shape-rendering="crispEdges"/>
<rect x="1060" y="328" width="1" height="12" fill="#e42c48" shape-rendering="crispEdges"/>
<rect x="1061" y="328" width="1" height="8" fill="#e42c48" shape-rendering="crispEdges"/>
<rect x="1062" y="325" width="1" height="8" fill="#e42c48" shape-rendering="crispEdges"/>
<rect x="1063" y="325" width="1" height="7" fill="#e42c48" shape-rendering="crispEdges"/>
<rect x="1064" y="326" width="1" height="8" fill="#e42c48" shape-rendering="crispEdges"/>
<rect x="1065" y="318" width="1" height="22.5" fill="#e42c48" shape-rendering="crispEdges"/>
<rect x="1066" y="318" width="1" height="22.5" fill="#e42c48" shape-rendering="crispEdges"/>
<rect x="1067" y="322" width="1" height="15" fill="#e42c48" shape-rendering="crispEdges"/>
<rect x="1068" y="325" width="1" height="9" fill="#e42c48" shape-rendering="crispEdges"/>
<rect x="1069" y="326" width="1" height="5" fill="#e42c48" shape-rendering="crispEdges"/>
<rect x="1070" y="327" width="1" height="3" fill="#e42c48" shape-rendering="crispEdges"/>
<rect x="1071" y="327" width="1" height="2.5" fill="#e42c48" shape-rendering="crispEdges"/>
<path d="M1071.0 328.5H1080.5V330.5H1088.5V331.5H1094.5V332.5H1104.5V333.5H1110.5V334.5H1116.5V335.5H1122.5V336.5H1128.5V337.5H1134.5V338.5H1141.5V339.5H1149.5V340.5H1156.5V341.5H1163.5V342.5H1170.5V343.5H1178.5V344.5H1188.5V345.5H1198.5V346.5H1219.5V347.5H1249.5V348.5H1751.0" fill="none" stroke="#e42c48" stroke-width="1.2" stroke-linejoin="miter"/>
<path d="M1130.0 336.0V339.0" stroke="#e42c48" stroke-width="1.2" fill="none" shape-rendering="crispEdges"/>
<path d="M1176.0 342.5V346.0" stroke="#e42c48" stroke-width="1.2" fill="none" shape-rendering="crispEdges"/>
<path d="M1191.0 344.0V347.5" stroke="#e42c48" stroke-width="1.2" fill="none" shape-rendering="crispEdges"/>
<path d="M1243.0 346.5V349.5" stroke="#e42c48" stroke-width="1.2" fill="none" shape-rendering="crispEdges"/>
<path d="M3.0 476.5H257.5V475.5H261.5V474.5H264.5V473.5H268.5V472.5H272.5V471.5H275.5V470.5H279.5V469.5H283.5V468.5H286.5V467.5H290.5V466.5H293.5V465.5H297.5V464.5H303.5V463.5H310.5V462.5H337.5V463.5H371.5V464.5H608.5V463.5H640.5V464.5H653.5V463.5H705.5V464.5H754.5V463.5H775.5V464.5H800.5V463.5H817.5V464.5H847.5V463.5H860.5V464.5H893.5V463.5H900.5V464.5H937.5V463.5H978.5V461.5H995.5V462.5H1005.5V463.5H1025.5V462.5H1035.5V463.5H1040.5V462.5H1045.5V463.5H1051.5V461.5H1052.5V460.5H1054.5V459.5H1055.5V458.5H1064.5V459.5H1067.5V460.5H1070.5V461.5H1074.5V462.5H1077.5V463.5H1080.5V464.5H1084.5V465.5H1088.5V466.5H1091.5V467.5H1094.5V468.5H1100.5V469.5H1106.5V470.5H1113.5V471.5H1120.5V472.5H1132.5V473.5H1143.5V474.5H1163.5V475.5H1216.5V476.5H1751.0" fill="none" stroke="#7cc227" stroke-width="1.2" stroke-linejoin="miter"/>
<path d="M3 582.5H1751" fill="none" stroke="#f28c1e" stroke-width="1.2" stroke-linejoin="miter"/>
<path d="M3.0 744.5H55.5V653.5H211.5V647.5H212.5V648.5H212.5V650.5H213.5V652.5H214.5V653.5H218.5V646.5H218.5V647.5H219.5V648.5H219.5V650.5H220.5V651.5H220.5V652.5H221.5V653.5H980.5V650.5H982.5V649.5H983.5V647.5H983.5V648.5H984.5V649.5H984.5V650.5H985.5V651.5H985.5V652.5H986.5V653.5H1055.5V643.5H1056.5V642.5H1070.5V643.5H1071.5V645.5H1072.5V647.5H1072.5V648.5H1073.5V649.5H1073.5V650.5H1074.5V652.5H1074.5V653.5H1130.5V645.5H1130.5V646.5H1131.5V648.5H1132.5V649.5H1132.5V650.5H1133.5V651.5H1133.5V652.5H1134.5V653.5H1174.5V642.5H1175.5V644.5H1175.5V645.5H1176.5V647.5H1176.5V648.5H1177.5V649.5H1177.5V650.5H1178.5V651.5H1178.5V652.5H1179.5V653.5H1189.5V648.5H1189.5V649.5H1190.5V651.5H1190.5V652.5H1191.5V653.5H1242.5V645.5H1242.5V646.5H1243.5V648.5H1244.5V649.5H1244.5V650.5H1245.5V651.5H1245.5V652.5H1246.5V653.5H1751.0" fill="none" stroke="#2323b5" stroke-width="1.2" stroke-linejoin="miter"/>
<path d="M85 652.6h2" stroke="#2323b5" stroke-width="1" shape-rendering="crispEdges"/>
<path d="M95 652.6h2" stroke="#2323b5" stroke-width="1" shape-rendering="crispEdges"/>
<path d="M117 652.6h2" stroke="#2323b5" stroke-width="1" shape-rendering="crispEdges"/>
<path d="M121 652.6h2" stroke="#2323b5" stroke-width="1" shape-rendering="crispEdges"/>
<path d="M128 652.6h2" stroke="#2323b5" stroke-width="1" shape-rendering="crispEdges"/>
<path d="M255 652.6h2" stroke="#2323b5" stroke-width="1" shape-rendering="crispEdges"/>
<path d="M263 652.6h2" stroke="#2323b5" stroke-width="1" shape-rendering="crispEdges"/>
<path d="M270 652.6h2" stroke="#2323b5" stroke-width="1" shape-rendering="crispEdges"/>
<path d="M280 652.6h2" stroke="#2323b5" stroke-width="1" shape-rendering="crispEdges"/>
<path d="M300 652.6h2" stroke="#2323b5" stroke-width="1" shape-rendering="crispEdges"/>
<path d="M330 652.6h2" stroke="#2323b5" stroke-width="1" shape-rendering="crispEdges"/>
<path d="M420 652.6h2" stroke="#2323b5" stroke-width="1" shape-rendering="crispEdges"/>
<path d="M455 652.6h2" stroke="#2323b5" stroke-width="1" shape-rendering="crispEdges"/>
<path d="M475 652.6h2" stroke="#2323b5" stroke-width="1" shape-rendering="crispEdges"/>
<path d="M548 652.6h2" stroke="#2323b5" stroke-width="1" shape-rendering="crispEdges"/>
<path d="M560 652.6h2" stroke="#2323b5" stroke-width="1" shape-rendering="crispEdges"/>
<path d="M992 652.6h2" stroke="#2323b5" stroke-width="1" shape-rendering="crispEdges"/>
<path d="M1002 652.6h2" stroke="#2323b5" stroke-width="1" shape-rendering="crispEdges"/>
<path d="M1009 652.6h2" stroke="#2323b5" stroke-width="1" shape-rendering="crispEdges"/>
<path d="M1018 652.6h2" stroke="#2323b5" stroke-width="1" shape-rendering="crispEdges"/>
<path d="M1028 652.6h2" stroke="#2323b5" stroke-width="1" shape-rendering="crispEdges"/>
<path d="M1096 652.6h2" stroke="#2323b5" stroke-width="1" shape-rendering="crispEdges"/>
<path d="M1105 652.6h2" stroke="#2323b5" stroke-width="1" shape-rendering="crispEdges"/>
<path d="M1112 652.6h2" stroke="#2323b5" stroke-width="1" shape-rendering="crispEdges"/>
<path d="M1120 652.6h2" stroke="#2323b5" stroke-width="1" shape-rendering="crispEdges"/>
<path d="M1160 652.6h2" stroke="#2323b5" stroke-width="1" shape-rendering="crispEdges"/>
<path d="M1215 652.6h2" stroke="#2323b5" stroke-width="1" shape-rendering="crispEdges"/>
<path d="M55.0 862.5H56.5V861.5H66.5V860.5H76.5V859.5H86.5V858.5H96.5V857.5H106.5V856.5H116.5V855.5H126.5V854.5H136.5V853.5H146.5V852.5H156.5V851.5H166.5V850.5H176.5V849.5H186.5V848.5H196.5V847.5H206.5V846.5H216.5V845.5H226.5V844.5H236.5V843.5H248.5V842.5H259.5V841.5H271.5V840.5H283.5V839.5H294.5V838.5H306.5V837.5H317.5V836.5H329.5V835.5H341.5V834.5H352.5V833.5H364.5V832.5H375.5V831.5H387.5V830.5H399.5V829.5H411.5V828.5H423.5V827.5H436.5V826.5H449.5V825.5H462.5V824.5H474.5V823.5H487.5V822.5H500.5V821.5H513.5V820.5H526.5V819.5H538.5V818.5H551.5V817.5H564.5V816.5H577.5V815.5H591.5V814.5H606.5V813.5H621.5V812.5H636.5V811.5H651.5V810.5H666.5V809.5H681.5V808.5H696.5V807.5H711.5V806.5H726.5V805.5H741.5V804.5H756.5V803.5H774.5V802.5H792.5V801.5H810.5V800.5H828.5V799.5H846.5V798.5H864.5V797.5H882.5V796.5H900.5V795.5H918.5V794.5H937.5V793.5H959.5V792.5H981.5V791.5H1003.5V790.5H1025.5V789.5H1048.5V788.5H1074.5V787.5H1100.5V786.5H1134.5V785.5H1169.5V784.5H1204.5V783.5H1239.5V782.5H1274.5V781.5H1344.5V780.5H1424.5V779.5H1571.5V778.5H1751.0" fill="none" stroke="#ee8a1c" stroke-width="1.2" stroke-linejoin="miter"/>
<path d="M3.0 977.5H255.5V976.5H259.5V975.5H263.5V974.5H268.5V973.5H273.5V972.5H280.5V971.5H288.5V970.5H295.5V969.5H303.5V968.5H312.5V967.5H321.5V966.5H329.5V965.5H338.5V964.5H347.5V963.5H356.5V962.5H364.5V961.5H373.5V960.5H382.5V959.5H391.5V958.5H399.5V957.5H409.5V956.5H420.5V955.5H431.5V954.5H443.5V953.5H454.5V952.5H465.5V951.5H476.5V950.5H487.5V949.5H499.5V948.5H510.5V947.5H521.5V946.5H532.5V945.5H543.5V944.5H555.5V943.5H566.5V942.5H577.5V941.5H593.5V940.5H610.5V939.5H628.5V938.5H645.5V937.5H663.5V936.5H680.5V935.5H698.5V934.5H715.5V933.5H733.5V932.5H750.5V931.5H767.5V930.5H784.5V929.5H801.5V928.5H818.5V927.5H835.5V926.5H849.5V925.5H850.5V926.5H851.5V925.5H852.5V926.5H856.5V925.5H857.5V926.5H862.5V925.5H865.5V926.5H866.5V925.5H869.5V926.5H870.5V925.5H871.5V926.5H873.5V925.5H876.5V926.5H877.5V925.5H882.5V924.5H884.5V925.5H885.5V924.5H886.5V925.5H892.5V924.5H893.5V925.5H901.5V924.5H909.5V925.5H910.5V924.5H931.5V923.5H938.5V924.5H939.5V923.5H942.5V924.5H943.5V923.5H944.5V924.5H945.5V923.5H950.5V922.5H952.5V923.5H954.5V922.5H955.5V923.5H959.5V922.5H960.5V923.5H966.5V922.5H967.5V923.5H968.5V922.5H969.5V923.5H970.5V922.5H974.5V921.5H975.5V922.5H976.5V917.5H977.5V922.5H978.5V923.5H979.5V924.5H980.5V925.5H982.5V926.5H984.5V927.5H985.5V928.5H990.5V929.5H991.5V928.5H994.5V927.5H997.5V926.5H999.5V925.5H1000.5V924.5H1010.5V923.5H1011.5V924.5H1018.5V925.5H1019.5V924.5H1024.5V925.5H1025.5V924.5H1028.5V925.5H1029.5V924.5H1030.5V925.5H1031.5V924.5H1041.5V925.5H1042.5V924.5H1045.5V925.5H1047.5V924.5H1050.5V925.5H1050.5V919.5H1052.5V925.5H1053.5V928.5H1054.5V931.5H1055.5V935.5H1056.5V938.5H1057.5V941.5H1058.5V945.5H1059.5V948.5H1060.5V951.5H1061.5V954.5H1062.5V957.5H1063.5V960.5H1064.5V961.5H1065.5V962.5H1066.5V963.5H1067.5V964.5H1068.5V965.5H1070.5V966.5H1071.5V967.5H1073.5V968.5H1074.5V969.5H1075.5V970.5H1078.5V971.5H1081.5V972.5H1084.5V973.5H1090.5V974.5H1105.5V975.5H1125.5V976.5H1156.5V977.5H1181.5V978.5H1751.0" fill="none" stroke="#6a2888" stroke-width="1.2" stroke-linejoin="miter"/>
</g>
<g shape-rendering="crispEdges">
<line x1="55.5" y1="68" x2="55.5" y2="992" stroke="#444" stroke-width="1" stroke-dasharray="5.5 4.5"/>
<line x1="3" y1="160.5" x2="1719" y2="160.5" stroke="#484848" stroke-width="1" stroke-dasharray="5 5"/>
<line x1="3" y1="245.5" x2="1740" y2="245.5" stroke="#484848" stroke-width="1" stroke-dasharray="5 5"/>
<line x1="3" y1="348.5" x2="1719" y2="348.5" stroke="#484848" stroke-width="1" stroke-dasharray="5 5"/>
<line x1="3" y1="477.5" x2="1740" y2="477.5" stroke="#484848" stroke-width="1" stroke-dasharray="5 5"/>
<line x1="3" y1="582.5" x2="1719" y2="582.5" stroke="#484848" stroke-width="1" stroke-dasharray="5 5"/>
<line x1="3" y1="862.5" x2="1719" y2="862.5" stroke="#484848" stroke-width="1" stroke-dasharray="5 5"/>
<line x1="3" y1="979.5" x2="1719" y2="979.5" stroke="#484848" stroke-width="1" stroke-dasharray="5 5"/>
</g>
<g shape-rendering="crispEdges">
<rect x="3" y="172" width="1748" height="2" fill="#4a4a4a" />
<rect x="3" y="289" width="1748" height="2" fill="#4a4a4a" />
<rect x="3" y="406" width="1748" height="2" fill="#4a4a4a" />
<rect x="3" y="523" width="1748" height="2" fill="#4a4a4a" />
<rect x="3" y="640" width="1748" height="2" fill="#4a4a4a" />
<rect x="3" y="757" width="1748" height="2" fill="#4a4a4a" />
<rect x="3" y="874" width="1748" height="2" fill="#4a4a4a" />
</g>
<g id="handles">
<path d="M8.5 103.39999999999999H30L42.099999999999994 115.6L30 128.39999999999998H8.5Q6.5 128.39999999999998 6.5 126.19999999999999V105.19999999999999Q6.5 103.39999999999999 8.5 103.39999999999999Z" fill="#3a3a3a" opacity="0.55"/>
<path d="M9.0 102.19999999999999H30L41.8 114.6L30 127.19999999999999H9.0Q6.5 127.19999999999999 6.5 124.69999999999999V104.69999999999999Q6.5 102.19999999999999 9.0 102.19999999999999Z" fill="#e9e9e9" stroke="#3a3a3a" stroke-width="1.1" stroke-linejoin="round"/>
<text x="22.90" y="117.80" font-size="11.6" letter-spacing="-0.200" text-anchor="middle" stroke="#111" stroke-width="0.3" fill="#111">C 1</text>
<path d="M8.5 220.39999999999998H30L42.099999999999994 232.6L30 245.39999999999998H8.5Q6.5 245.39999999999998 6.5 243.2V222.2Q6.5 220.39999999999998 8.5 220.39999999999998Z" fill="#2cc5cd" opacity="0.55"/>
<path d="M9.0 219.2H30L41.8 231.6L30 244.2H9.0Q6.5 244.2 6.5 241.7V221.7Q6.5 219.2 9.0 219.2Z" fill="#e4f8f9" stroke="#2cc5cd" stroke-width="1.1" stroke-linejoin="round"/>
<text x="22.90" y="234.80" font-size="11.6" letter-spacing="-0.200" text-anchor="middle" stroke="#111" stroke-width="0.3" fill="#111">C 2</text>
<path d="M8.5 337.40000000000003H30L42.099999999999994 349.6L30 362.40000000000003H8.5Q6.5 362.40000000000003 6.5 360.20000000000005V339.20000000000005Q6.5 337.40000000000003 8.5 337.40000000000003Z" fill="#ee6d80" opacity="0.55"/>
<path d="M9.0 336.20000000000005H30L41.8 348.6L30 361.20000000000005H9.0Q6.5 361.20000000000005 6.5 358.70000000000005V338.70000000000005Q6.5 336.20000000000005 9.0 336.20000000000005Z" fill="#fdeaec" stroke="#ee6d80" stroke-width="1.1" stroke-linejoin="round"/>
<text x="22.90" y="351.80" font-size="11.6" letter-spacing="-0.200" text-anchor="middle" stroke="#e8506a" stroke-width="0.3" fill="#e8506a">C 3</text>
<path d="M8.5 454.40000000000003H30L42.099999999999994 466.6L30 479.40000000000003H8.5Q6.5 479.40000000000003 6.5 477.20000000000005V456.20000000000005Q6.5 454.40000000000003 8.5 454.40000000000003Z" fill="#8fcc3c" opacity="0.55"/>
<path d="M9.0 453.20000000000005H30L41.8 465.6L30 478.20000000000005H9.0Q6.5 478.20000000000005 6.5 475.70000000000005V455.70000000000005Q6.5 453.20000000000005 9.0 453.20000000000005Z" fill="#f0f8e4" stroke="#8fcc3c" stroke-width="1.1" stroke-linejoin="round"/>
<text x="22.90" y="468.80" font-size="11.6" letter-spacing="-0.200" text-anchor="middle" stroke="#111" stroke-width="0.3" fill="#111">C 4</text>
<path d="M8.5 571.4000000000001H30L42.099999999999994 583.6L30 596.4000000000001H8.5Q6.5 596.4000000000001 6.5 594.2V573.2Q6.5 571.4000000000001 8.5 571.4000000000001Z" fill="#f5a348" opacity="0.55"/>
<path d="M9.0 570.2H30L41.8 582.6L30 595.2H9.0Q6.5 595.2 6.5 592.7V572.7Q6.5 570.2 9.0 570.2Z" fill="#fdf2e4" stroke="#f5a348" stroke-width="1.1" stroke-linejoin="round"/>
<text x="22.90" y="585.80" font-size="11.6" letter-spacing="-0.200" text-anchor="middle" stroke="#111" stroke-width="0.3" fill="#111">C 5</text>
<path d="M8.5 688.4000000000001H30L42.099999999999994 700.6L30 713.4000000000001H8.5Q6.5 713.4000000000001 6.5 711.2V690.2Q6.5 688.4000000000001 8.5 688.4000000000001Z" fill="#16166e" opacity="0.55"/>
<path d="M9.0 687.2H30L41.8 699.6L30 712.2H9.0Q6.5 712.2 6.5 709.7V689.7Q6.5 687.2 9.0 687.2Z" fill="#2a2ac2" stroke="#16166e" stroke-width="1.1" stroke-linejoin="round"/>
<text x="22.90" y="702.80" font-size="11.6" letter-spacing="-0.200" text-anchor="middle" stroke="#ffffff" stroke-width="0.3" fill="#ffffff">C 6</text>
<path d="M8.5 850.4000000000001H30L42.099999999999994 862.6L30 875.4000000000001H8.5Q6.5 875.4000000000001 6.5 873.2V852.2Q6.5 850.4000000000001 8.5 850.4000000000001Z" fill="#f5a348" opacity="0.55"/>
<path d="M9.0 849.2H30L41.8 861.6L30 874.2H9.0Q6.5 874.2 6.5 871.7V851.7Q6.5 849.2 9.0 849.2Z" fill="#fdf2e4" stroke="#f5a348" stroke-width="1.1" stroke-linejoin="round"/>
<text x="22.90" y="864.80" font-size="11.6" letter-spacing="-0.200" text-anchor="middle" stroke="#111" stroke-width="0.3" fill="#111">M 1</text>
<path d="M8.5 967.4000000000001H30L42.099999999999994 979.6L30 992.4000000000001H8.5Q6.5 992.4000000000001 6.5 990.2V969.2Q6.5 967.4000000000001 8.5 967.4000000000001Z" fill="#a070b8" opacity="0.55"/>
<path d="M9.0 966.2H30L41.8 978.6L30 991.2H9.0Q6.5 991.2 6.5 988.7V968.7Q6.5 966.2 9.0 966.2Z" fill="#f0e6f5" stroke="#a070b8" stroke-width="1.1" stroke-linejoin="round"/>
<text x="22.90" y="981.80" font-size="11.6" letter-spacing="-0.200" text-anchor="middle" stroke="#7a3a98" stroke-width="0.3" fill="#7a3a98">M 2</text>
</g>
<rect x="3" y="874" width="45" height="2" fill="#4a4a4a" />
<g id="names">
<text x="53.20" y="121.20" font-size="19.5" letter-spacing="0.294"  fill="rgba(0,0,0,0.5)">U_loop,coil</text>
<text x="52.70" y="120.50" font-size="19.5" letter-spacing="0.294" stroke="#0a0a0a" stroke-width="0.15" fill="#0a0a0a">U_loop,coil</text>
<text x="53.40" y="237.70" font-size="19.5" letter-spacing="0.048"  fill="rgba(0,0,0,0.5)">U_Bt,coil</text>
<text x="52.90" y="237.00" font-size="19.5" letter-spacing="0.048" stroke="#1fb9c1" stroke-width="0.15" fill="#1fb9c1">U_Bt,coil</text>
<text x="53.70" y="354.40" font-size="19.5" letter-spacing="-0.185"  fill="rgba(0,0,0,0.5)">U_Rog,coil</text>
<text x="53.20" y="353.70" font-size="19.5" letter-spacing="-0.185" stroke="#e0344e" stroke-width="0.15" fill="#e0344e">U_Rog,coil</text>
<text x="53.50" y="471.90" font-size="19.5" letter-spacing="0.147"  fill="rgba(0,0,0,0.5)">U_Photod</text>
<text x="53.00" y="471.20" font-size="19.5" letter-spacing="0.147" stroke="#79bd25" stroke-width="0.15" fill="#79bd25">U_Photod</text>
<text x="53.50" y="588.70" font-size="19.5" letter-spacing="0.101"  fill="rgba(0,0,0,0.5)">U_Diamagn</text>
<text x="53.00" y="588.00" font-size="19.5" letter-spacing="0.101" stroke="#ee8c22" stroke-width="0.15" fill="#ee8c22">U_Diamagn</text>
<text x="53.86" y="706.20" font-size="19.5" letter-spacing="0.116"  fill="rgba(0,0,0,0.5)">Trigger</text>
<text x="53.36" y="705.50" font-size="19.5" letter-spacing="0.116" stroke="#2424b4" stroke-width="0.15" fill="#2424b4">Trigger</text>
<text x="53.06" y="865.00" font-size="17.5" letter-spacing="1.248"  fill="rgba(0,0,0,0.5)">B_t</text>
<text x="52.56" y="864.30" font-size="17.5" letter-spacing="1.248" stroke="#e98a20" stroke-width="0.15" fill="#e98a20">B_t</text>
<text x="52.79" y="982.90" font-size="18.5" letter-spacing="0.283"  fill="rgba(0,0,0,0.5)">I_p</text>
<text x="52.29" y="982.20" font-size="18.5" letter-spacing="0.283" stroke="#6a2888" stroke-width="0.15" fill="#6a2888">I_p</text>
</g>
<path d="M45 57H65.5L55.4 66.8Z" fill="#f78a1e"/>
<path d="M46 643H64V661.7H59.2L55.4 668L51.6 661.7H46Z" fill="#000" stroke="#f78a1e" stroke-width="2" stroke-linejoin="miter"/>
<text x="55.20" y="657.90" font-size="14.5" font-weight="bold" text-anchor="middle"  fill="#f78a1e">T</text>
<path d="M1729.5 699.6L1742.5 689.8V698.1H1751V701.3H1742.5V709.4Z" fill="#2323b5"/>
<path d="M1711 63.6H1742.5Q1745.3 63.6 1745.3 66.4V95.5Q1745.3 98.6 1743 96.6L1710.2 66Q1708.6 63.6 1711 63.6Z" fill="#4f4f4f" stroke="#0c0c0c" stroke-width="1.2" stroke-linejoin="round"/>
<circle cx="1737.2" cy="70.7" r="3.9" fill="none" stroke="#9c9c9c" stroke-width="1.4"/>
<path d="M1734.2 73.9L1727.9 79.3" stroke="#9c9c9c" stroke-width="2.8" stroke-linecap="round"/>
<g fill="none" stroke="#e4e4e4" stroke-width="1.1">
<path d="M593 36.7H586.6V52.6H593"/>
<path d="M1160.6 36.7H1167V52.6H1160.6"/>
</g>
<path d="M586.6 44.9H1167" stroke="#b4b4b4" stroke-width="1.6" fill="none"/>
<path d="M595.8 33.2H611.2L603.5 38Z" fill="#f78a1e"/>
<path d="M597 40.6H609.4V51.8H606L603.3 56L600.6 51.8H597Z" fill="#000" stroke="#f78a1e" stroke-width="1.4"/>
<text x="603.20" y="50.60" font-size="10" font-weight="bold" text-anchor="middle"  fill="#f78a1e">T</text>
<path d="M1920 29.5H1769.5V993.8H1920" fill="none" stroke="#5e5650" stroke-width="1"/>
<text x="1785.46 1797.42 1813.49 1830.83 1838.91 1848.42 1865.21 1880.69 1887.39" y="25.8" font-size="30.2" font-weight="bold" fill="#fff" stroke="#fff" stroke-width="0.25">Tektronix</text>
<path d="M1815.0 25.9H1821.4L1830.6 9.6H1824.3Z" fill="#1fc0e0"/>
<text x="1806.15" y="43.70" font-size="14" font-weight="bold" letter-spacing="0.639"  fill="#f4f4f4">Add New...</text>
<rect x="1777.5" y="54.3" width="62.5" height="36.2" fill="url(#gBtn)" rx="6.5" stroke="#6b635d" stroke-width="1" />
<rect x="1849" y="54.3" width="62.5" height="36.2" fill="url(#gBtn)" rx="6.5" stroke="#6b635d" stroke-width="1" />
<rect x="1777.5" y="100.3" width="62.5" height="36.2" fill="url(#gBtn)" rx="6.5" stroke="#6b635d" stroke-width="1" />
<rect x="1849" y="100.3" width="62.5" height="36.2" fill="url(#gBtn)" rx="6.5" stroke="#6b635d" stroke-width="1" />
<rect x="1777.5" y="146.3" width="62.5" height="36.2" fill="url(#gBtn)" rx="6.5" stroke="#6b635d" stroke-width="1" />
<rect x="1849" y="146.3" width="62.5" height="36.2" fill="url(#gBtn)" rx="6.5" stroke="#6b635d" stroke-width="1" />
<rect x="1777.5" y="196.3" width="62.5" height="36.2" fill="url(#gBtn)" rx="6.5" stroke="#6b635d" stroke-width="1" />
<rect x="1849" y="196.3" width="62.5" height="36.2" fill="url(#gBtn)" rx="6.5" stroke="#6b635d" stroke-width="1" />
<text x="1783.41" y="77.00" font-size="15.5" letter-spacing="-0.568"  fill="#f0f0f0">Cursors</text>
<text x="1854.91" y="77.00" font-size="15.5" letter-spacing="0.242"  fill="#f0f0f0">Callout</text>
<text x="1778.03" y="122.70" font-size="15.5" letter-spacing="-0.024"  fill="#f0f0f0">Measure</text>
<text x="1856.80" y="122.70" font-size="15.5" letter-spacing="-0.480"  fill="#f0f0f0">Search</text>
<text x="1783.43" y="160.60" font-size="15.5" letter-spacing="-0.425"  fill="#f0f0f0">Results</text>
<text x="1790.85" y="176.80" font-size="15.5" letter-spacing="-0.734"  fill="#f0f0f0">Table</text>
<text x="1865.43" y="168.40" font-size="15.5" letter-spacing="0.659"  fill="#f0f0f0">Plot</text>
<text x="1854.53" y="218.80" font-size="15.5" letter-spacing="0.609"  fill="#f0f0f0">More...</text>
<path d="M1773 189.3H1917M1773 241.4H1917" stroke="#5e5650" stroke-width="1"/>
<rect x="1797.5" y="203" width="21.5" height="19" fill="none" stroke="#dcdcdc" stroke-width="1.8" stroke-dasharray="3.6 2.6"/>
<circle cx="1810.3" cy="210.3" r="4.6" fill="none" stroke="#d8d8d8" stroke-width="1.5"/>
<path d="M1806.8 213.6L1802 217.6" stroke="#d8d8d8" stroke-width="2.2" stroke-linecap="round"/>
<path d="M1814.2 216.9L1822.9 222.3L1819.6 223.1L1821.8 226.6L1820.1 227.5L1818 224.1L1816 226.4Z" fill="#c4c4c4"/>
<circle cx="1762" cy="503.2" r="2.1" fill="#d6d6d6"/>
<circle cx="1762" cy="512" r="2.1" fill="#d6d6d6"/>
<circle cx="1762" cy="520.6" r="2.1" fill="#d6d6d6"/>
<path d="M3 987.8Q3 984.3 6.5 984.3H89.5Q93 984.3 93 987.8V1074.3Q93 1078.3 89 1078.3H7Q3 1078.3 3 1074.3Z" fill="#c9c9c9"/>
<path d="M3 987.8Q3 984.3 6.5 984.3H89.5Q93 984.3 93 987.8V1002.9H3Z" fill="#1e1e1e"/>
<rect x="3" y="1002.9" width="90" height="2.0" fill="#b4b4b4" />
<text x="8.22" y="998.30" font-size="15.3" letter-spacing="-0.165"  fill="#f0e63c">Ch 1</text>
<rect x="3" y="1008.3" width="90" height="16.8" fill="#ff0000" />
<path d="M10.8 1009.6L18.4 1023.6H3.4Z" fill="#f4ec18" stroke="#3a3a78" stroke-width="0.9" stroke-linejoin="round"/>
<path d="M10.8 1013.4V1019.4M10.8 1020.8V1022.2" stroke="#8a8430" stroke-width="1.5"/>
<text x="18.72" y="1020.50" font-size="15.3" letter-spacing="0.497"  fill="#ffffff">Clipping</text>
<text x="9.89" y="1040.20" font-size="15.3" letter-spacing="0.065"  fill="#101010">5 V/div</text>
<text x="9.83" y="1060.20" font-size="15.3" letter-spacing="0.460"  fill="#101010">1 MΩ</text>
<text x="9.73" y="1077.60" font-size="15.3" letter-spacing="-0.016"  fill="#101010">200 kHz</text>
<text x="77.00" y="1072.20" font-size="9"  fill="#101010">B</text>
<text x="82.00" y="1075.50" font-size="9"  fill="#101010">w</text>
<path d="M98 987.8Q98 984.3 101.5 984.3H184.5Q188 984.3 188 987.8V1074.3Q188 1078.3 184 1078.3H102Q98 1078.3 98 1074.3Z" fill="#c9c9c9"/>
<path d="M98 987.8Q98 984.3 101.5 984.3H184.5Q188 984.3 188 987.8V1002.9H98Z" fill="#1f4447"/>
<rect x="98" y="1002.9" width="90" height="2.0" fill="#b4b4b4" />
<text x="103.22" y="998.30" font-size="15.3" letter-spacing="-0.157"  fill="#22cdd8">Ch 2</text>
<rect x="98" y="1008.3" width="90" height="16.8" fill="#ff0000" />
<path d="M105.8 1009.6L113.4 1023.6H98.4Z" fill="#f4ec18" stroke="#3a3a78" stroke-width="0.9" stroke-linejoin="round"/>
<path d="M105.8 1013.4V1019.4M105.8 1020.8V1022.2" stroke="#8a8430" stroke-width="1.5"/>
<text x="113.72" y="1020.50" font-size="15.3" letter-spacing="0.497"  fill="#ffffff">Clipping</text>
<text x="104.73" y="1040.20" font-size="15.3" letter-spacing="0.032"  fill="#101010">250 mV/div</text>
<text x="104.83" y="1060.20" font-size="15.3" letter-spacing="0.460"  fill="#101010">1 MΩ</text>
<text x="104.73" y="1077.60" font-size="15.3" letter-spacing="-0.016"  fill="#101010">200 kHz</text>
<text x="172.00" y="1072.20" font-size="9"  fill="#101010">B</text>
<text x="177.00" y="1075.50" font-size="9"  fill="#101010">w</text>
<path d="M193 987.8Q193 984.3 196.5 984.3H279.5Q283 984.3 283 987.8V1074.3Q283 1078.3 279 1078.3H197Q193 1078.3 193 1074.3Z" fill="#c9c9c9"/>
<path d="M193 987.8Q193 984.3 196.5 984.3H279.5Q283 984.3 283 987.8V1002.9H193Z" fill="#47272c"/>
<rect x="193" y="1002.9" width="90" height="2.0" fill="#b4b4b4" />
<text x="198.22" y="998.30" font-size="15.3" letter-spacing="-0.190"  fill="#f2eaea">Ch 3</text>
<rect x="193" y="1008.3" width="90" height="16.8" fill="#ff0000" />
<path d="M200.8 1009.6L208.4 1023.6H193.4Z" fill="#f4ec18" stroke="#3a3a78" stroke-width="0.9" stroke-linejoin="round"/>
<path d="M200.8 1013.4V1019.4M200.8 1020.8V1022.2" stroke="#8a8430" stroke-width="1.5"/>
<text x="208.72" y="1020.50" font-size="15.3" letter-spacing="0.497"  fill="#ffffff">Clipping</text>
<text x="200.15" y="1040.20" font-size="15.3" letter-spacing="-0.015"  fill="#101010">450 mV/div</text>
<text x="199.83" y="1060.20" font-size="15.3" letter-spacing="0.460"  fill="#101010">1 MΩ</text>
<text x="199.73" y="1077.60" font-size="15.3" letter-spacing="-0.016"  fill="#101010">200 kHz</text>
<text x="267.00" y="1072.20" font-size="9"  fill="#101010">B</text>
<text x="272.00" y="1075.50" font-size="9"  fill="#101010">w</text>
<path d="M288 1002.7Q288 999.2 291.5 999.2H374.5Q378 999.2 378 1002.7V1074.3Q378 1078.3 374 1078.3H292Q288 1078.3 288 1074.3Z" fill="#c9c9c9"/>
<path d="M288 1002.7Q288 999.2 291.5 999.2H374.5Q378 999.2 378 1002.7V1017.8000000000001H288Z" fill="#3a4426"/>
<rect x="288" y="1017.8000000000001" width="90" height="2.0" fill="#b4b4b4" />
<text x="293.22" y="1013.20" font-size="15.3" letter-spacing="-0.098"  fill="#8fd42c">Ch 4</text>
<text x="294.73" y="1035.60" font-size="15.3" letter-spacing="0.065"  fill="#101010">200 mV/div</text>
<text x="294.83" y="1055.60" font-size="15.3" letter-spacing="0.460"  fill="#101010">1 MΩ</text>
<text x="294.73" y="1073.60" font-size="15.3" letter-spacing="-0.016"  fill="#101010">200 kHz</text>
<text x="362.00" y="1068.20" font-size="9"  fill="#101010">B</text>
<text x="367.00" y="1071.50" font-size="9"  fill="#101010">w</text>
<path d="M383 1002.7Q383 999.2 386.5 999.2H469.5Q473 999.2 473 1002.7V1074.3Q473 1078.3 469 1078.3H387Q383 1078.3 383 1074.3Z" fill="#c9c9c9"/>
<path d="M383 1002.7Q383 999.2 386.5 999.2H469.5Q473 999.2 473 1002.7V1017.8000000000001H383Z" fill="#4f3621"/>
<rect x="383" y="1017.8000000000001" width="90" height="2.0" fill="#b4b4b4" />
<text x="388.22" y="1013.20" font-size="15.3" letter-spacing="-0.033"  fill="#f8962a">Ch 5</text>
<text x="390.33" y="1035.60" font-size="15.3" letter-spacing="-0.009"  fill="#101010">1 V/div</text>
<text x="389.83" y="1055.60" font-size="15.3" letter-spacing="0.460"  fill="#101010">1 MΩ</text>
<text x="389.73" y="1073.60" font-size="15.3" letter-spacing="-0.016"  fill="#101010">200 kHz</text>
<text x="457.00" y="1068.20" font-size="9"  fill="#101010">B</text>
<text x="462.00" y="1071.50" font-size="9"  fill="#101010">w</text>
<path d="M478 987.8Q478 984.3 481.5 984.3H564.5Q568 984.3 568 987.8V1074.3Q568 1078.3 564 1078.3H482Q478 1078.3 478 1074.3Z" fill="#c9c9c9"/>
<path d="M478 987.8Q478 984.3 481.5 984.3H564.5Q568 984.3 568 987.8V1002.9H478Z" fill="#2a2ac0"/>
<rect x="478" y="1002.9" width="90" height="2.0" fill="#b4b4b4" />
<text x="483.22" y="998.30" font-size="15.3" letter-spacing="-0.190"  fill="#ffffff">Ch 6</text>
<rect x="478" y="1008.3" width="90" height="16.8" fill="#ff0000" />
<path d="M485.8 1009.6L493.4 1023.6H478.4Z" fill="#f4ec18" stroke="#3a3a78" stroke-width="0.9" stroke-linejoin="round"/>
<path d="M485.8 1013.4V1019.4M485.8 1020.8V1022.2" stroke="#8a8430" stroke-width="1.5"/>
<text x="493.72" y="1020.50" font-size="15.3" letter-spacing="0.497"  fill="#ffffff">Clipping</text>
<text x="484.72" y="1040.20" font-size="15.3" letter-spacing="0.033"  fill="#101010">750 mV/div</text>
<text x="484.83" y="1060.20" font-size="15.3" letter-spacing="0.460"  fill="#101010">1 MΩ</text>
<text x="484.73" y="1077.60" font-size="15.3" letter-spacing="-0.016"  fill="#101010">200 kHz</text>
<text x="552.00" y="1072.20" font-size="9"  fill="#101010">B</text>
<text x="557.00" y="1075.50" font-size="9"  fill="#101010">w</text>
<path d="M573 1002.7Q573 999.2 576.5 999.2H659.5Q663 999.2 663 1002.7V1074.3Q663 1078.3 659 1078.3H577Q573 1078.3 573 1074.3Z" fill="#c9c9c9"/>
<path d="M573 1002.7Q573 999.2 576.5 999.2H659.5Q663 999.2 663 1002.7V1017.8000000000001H573Z" fill="#4a3421"/>
<rect x="573" y="1017.8000000000001" width="90" height="2.0" fill="#b4b4b4" />
<text x="577.74" y="1013.20" font-size="15.3" letter-spacing="0.546"  fill="#f29a30">Math 1</text>
<text x="579.94" y="1035.60" font-size="15.3" font-weight="bold" letter-spacing="-0.070"  fill="#101010">66.0195 …</text>
<text x="579.09" y="1055.60" font-size="15.3" letter-spacing="0.368"  fill="#101010">Intg(ch2)…</text>
<path d="M668 1002.7Q668 999.2 671.5 999.2H754.5Q758 999.2 758 1002.7V1074.3Q758 1078.3 754 1078.3H672Q668 1078.3 668 1074.3Z" fill="#c9c9c9"/>
<path d="M668 1002.7Q668 999.2 671.5 999.2H754.5Q758 999.2 758 1002.7V1017.8000000000001H668Z" fill="#2f2231"/>
<rect x="668" y="1017.8000000000001" width="90" height="2.0" fill="#b4b4b4" />
<text x="672.74" y="1013.20" font-size="15.3" letter-spacing="0.810"  fill="#f4f0f4">Math 2</text>
<text x="674.84" y="1035.60" font-size="15.3" font-weight="bold" letter-spacing="-0.153"  fill="#101010">782.9049…</text>
<text x="674.82" y="1055.60" font-size="15.3" letter-spacing="0.381"  fill="#101010">-intg(ch3…</text>
<path d="M1117.5 1000V1077M1268.7 1000V1077M1811.3 1000V1077" stroke="#5e5650" stroke-width="1"/>
<rect x="1129" y="999" width="38.5" height="78.5" fill="url(#gBtn)" rx="6" stroke="#6b635d" stroke-width="1" />
<path d="M1132.5 1006.8H1164" stroke="#b4202c" stroke-width="1.8"/>
<text x="1148.20" y="1031.80" font-size="15.3" letter-spacing="0.400" text-anchor="middle"  fill="#f0f0f0">Add</text>
<text x="1148.20" y="1047.90" font-size="15.3" letter-spacing="0.400" text-anchor="middle"  fill="#f0f0f0">New</text>
<text x="1148.20" y="1063.90" font-size="15.3" letter-spacing="0.400" text-anchor="middle"  fill="#f0f0f0">Math</text>
<rect x="1174" y="999" width="38.5" height="78.5" fill="url(#gBtn)" rx="6" stroke="#6b635d" stroke-width="1" />
<path d="M1177.5 1006.8H1209" stroke="#c9c9d6" stroke-width="1.8"/>
<text x="1193.20" y="1031.80" font-size="15.3" letter-spacing="0.400" text-anchor="middle"  fill="#f0f0f0">Add</text>
<text x="1193.20" y="1047.90" font-size="15.3" letter-spacing="0.400" text-anchor="middle"  fill="#f0f0f0">New</text>
<text x="1193.20" y="1063.90" font-size="15.3" letter-spacing="0.400" text-anchor="middle"  fill="#f0f0f0">Ref</text>
<rect x="1219" y="999" width="38.5" height="78.5" fill="url(#gBtn)" rx="6" stroke="#6b635d" stroke-width="1" />
<path d="M1222.5 1006.8H1254" stroke="#c45cf2" stroke-width="1.8"/>
<text x="1238.20" y="1031.80" font-size="15.3" letter-spacing="0.400" text-anchor="middle"  fill="#f0f0f0">Add</text>
<text x="1238.20" y="1047.90" font-size="15.3" letter-spacing="0.400" text-anchor="middle"  fill="#f0f0f0">New</text>
<text x="1238.20" y="1063.90" font-size="15.3" letter-spacing="0.400" text-anchor="middle"  fill="#f0f0f0">Bus</text>
<rect x="1280" y="1000" width="198" height="78" rx="4" fill="#c9c9c9" stroke="#0c0c0c" stroke-width="1.2"/>
<path d="M1280.6 1004Q1280.6 1000.6 1284 1000.6H1474Q1477.4 1000.6 1477.4 1004V1019H1280.6Z" fill="#58595b"/>
<rect x="1280.6" y="1019" width="196.8" height="1.6" fill="#b2b2b2" />
<text x="1284.34" y="1013.80" font-size="15.3" letter-spacing="0.644"  fill="#ececec">Horizontal</text>
<text x="1285.42" y="1035.20" font-size="15.3" letter-spacing="-0.047"  fill="#101010">3 ms/div</text>
<text x="1391.92" y="1035.20" font-size="15.3" letter-spacing="-0.507"  fill="#101010">30 ms</text>
<text x="1285.31" y="1054.60" font-size="15.3" letter-spacing="-0.847"  fill="#101010">SR: 1 MS/s</text>
<text x="1391.83" y="1054.60" font-size="15.3" letter-spacing="0.007"  fill="#101010">1 µs/pt</text>
<text x="1284.74" y="1073.20" font-size="15.3" letter-spacing="-0.158"  fill="#101010">RL: 30 kpts</text>
<text x="1406.42" y="1073.20" font-size="15.3" letter-spacing="-0.485"  fill="#101010">3%</text>
<path d="M1392.6 1062.6H1400.6V1070.4H1398.4L1396.6 1073.4L1394.8 1070.4H1392.6Z" fill="#000" stroke="#f78a1e" stroke-width="1.2"/>
<text x="1396.60" y="1069.60" font-size="7.5" font-weight="bold" text-anchor="middle"  fill="#f78a1e">T</text>
<rect x="1485" y="1000" width="158" height="78" rx="4" fill="#c9c9c9" stroke="#0c0c0c" stroke-width="1.2"/>
<path d="M1485.6 1004Q1485.6 1000.6 1489 1000.6H1639Q1642.4 1000.6 1642.4 1004V1019H1485.6Z" fill="#58595b"/>
<rect x="1485.6" y="1019" width="156.8" height="1.6" fill="#b2b2b2" />
<text x="1490.26" y="1013.80" font-size="15.3" letter-spacing="0.056"  fill="#ececec">Trigger</text>
<rect x="1491" y="1023.8" width="29.5" height="15.8" fill="#2a2ac0" rx="4.5" stroke="#0a0a3a" stroke-width="1" />
<text x="1505.80" y="1036.60" font-size="15.3" text-anchor="middle"  fill="#ffffff">6</text>
<path d="M1531 1035.6H1536L1542 1026.4H1547" fill="none" stroke="#4a4ab4" stroke-width="1.2"/>
<text x="1556.92" y="1035.20" font-size="15.3" letter-spacing="-0.507"  fill="#101010">3 V</text>
<rect x="1650" y="1000" width="148" height="78" rx="4" fill="#c9c9c9" stroke="#0c0c0c" stroke-width="1.2"/>
<path d="M1650.6 1004Q1650.6 1000.6 1654 1000.6H1794Q1797.4 1000.6 1797.4 1004V1019H1650.6Z" fill="#58595b"/>
<rect x="1650.6" y="1019" width="146.8" height="1.6" fill="#b2b2b2" />
<text x="1655.57" y="1013.80" font-size="15.3" letter-spacing="0.393"  fill="#ececec">Acquisition</text>
<text x="1655.74" y="1035.20" font-size="15.3" letter-spacing="0.616"  fill="#101010">Manual,</text>
<text x="1737.47" y="1035.20" font-size="15.3" letter-spacing="0.213"  fill="#101010">Analyze</text>
<text x="1655.74" y="1054.60" font-size="15.3" letter-spacing="-0.075"  fill="#101010">High Res: 16 bits</text>
<text x="1656.31" y="1073.20" font-size="15.3" letter-spacing="-0.192"  fill="#101010">Single: 1 /1</text>
<rect x="1822.5" y="998.8" width="89" height="34.6" fill="#ff1f27" rx="6.5" stroke="#5a4a4a" stroke-width="1" />
<text x="1841.59" y="1019.20" font-size="14.2" font-weight="bold" letter-spacing="-0.908"  fill="#ffffff">Stopped</text>
<rect x="1822" y="1042" width="90" height="36" fill="#c9c9c9" rx="5.5" />
<text x="1824.39" y="1057.20" font-size="15.5" letter-spacing="-0.384"  fill="#101010">09 Dec 2024</text>
<text x="1828.13" y="1073.90" font-size="15.5" letter-spacing="-0.181"  fill="#101010">8:28:43 PM</text>
</svg></body></html>
